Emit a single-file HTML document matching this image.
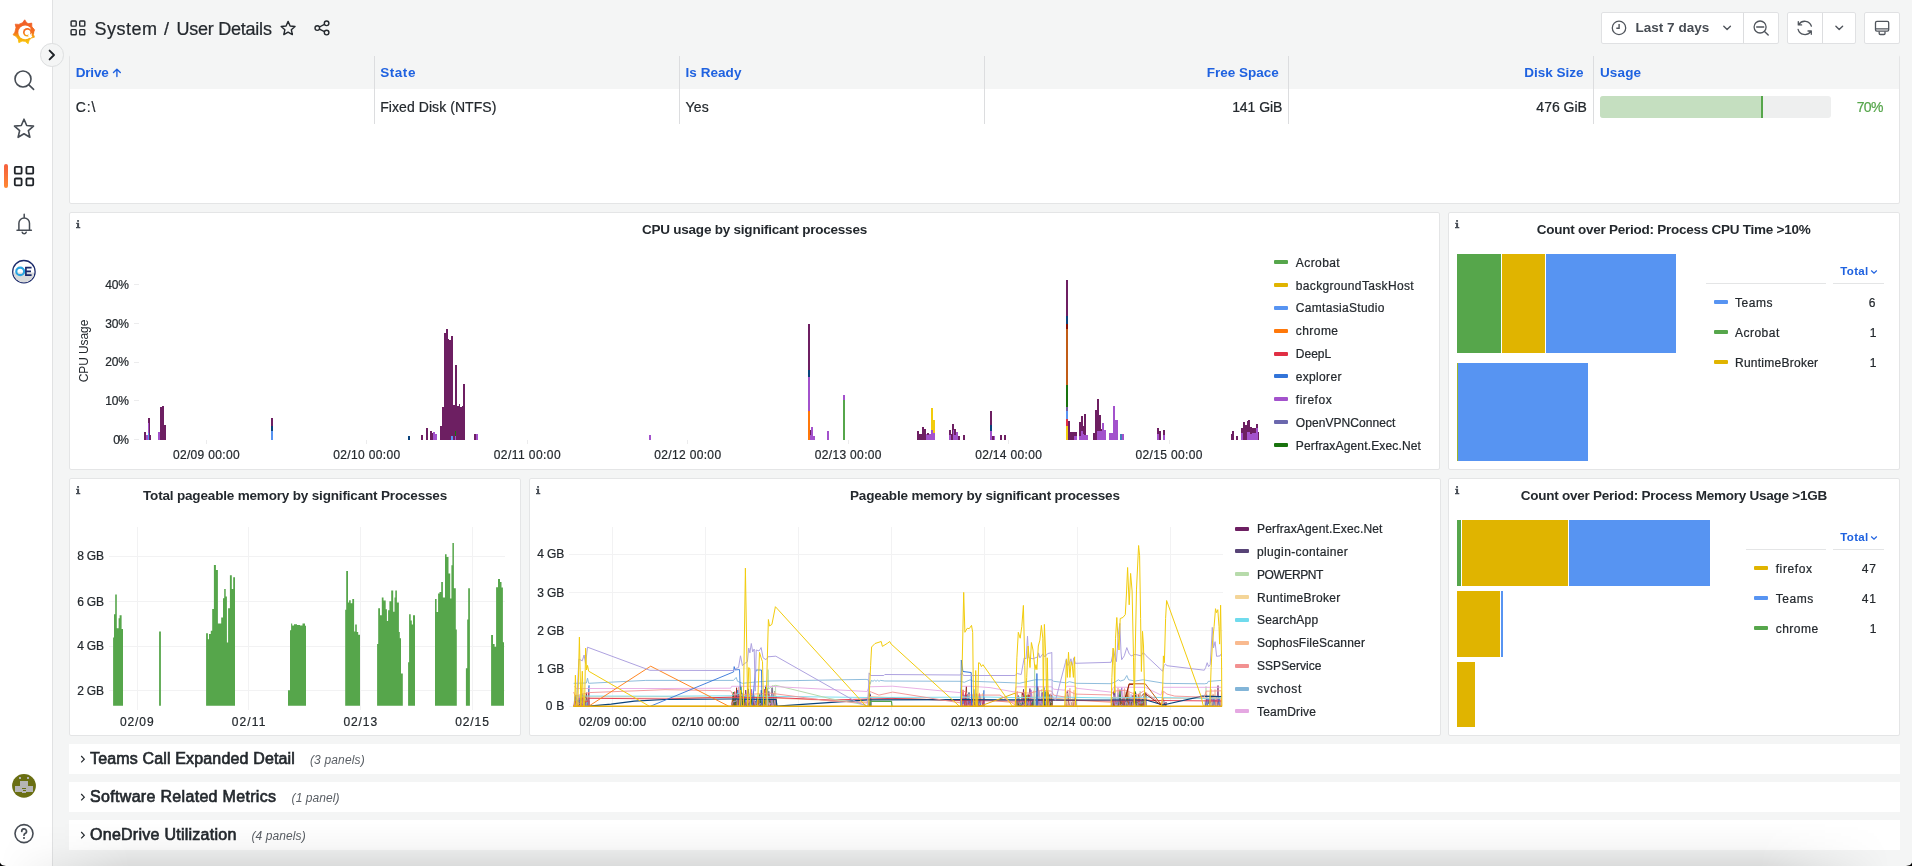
<!DOCTYPE html><html><head><meta charset="utf-8"><title>System / User Details</title><style>
*{box-sizing:border-box;margin:0;padding:0}
html,body{width:1912px;height:866px;overflow:hidden;background:#f4f5f5;font-family:"Liberation Sans",sans-serif;color:#24292e;font-size:14px}
#wrap{position:absolute;left:0;top:0;width:1912px;height:866px;overflow:hidden;will-change:transform;transform:translateZ(0)}
.abs{position:absolute}
#side{position:absolute;left:0;top:0;width:53px;height:866px;background:#fff;border-right:1px solid #e1e2e3}
.panel{position:absolute;background:#fff;border:1px solid #e4e5e6;border-radius:2px}
.t{position:absolute;white-space:nowrap;line-height:1}
.row{position:absolute;left:69px;width:1831px;height:30px;background:#fff}
.btn{position:absolute;background:#fff;border:1px solid #e0e1e3;border-radius:2px}
svg{position:absolute;overflow:visible}
.sw{position:absolute;width:14px;height:4px;border-radius:1px}
</style></head><body><div id="wrap">
<div id="side"></div>
<div class="t" style="left:94.52px;top:20.00px;font-size:18px;color:#24292e;letter-spacing:0.490px;-webkit-text-stroke:0.22px #24292e;">System</div>
<div class="t" style="left:163.92px;top:20.00px;font-size:18px;color:#24292e;-webkit-text-stroke:0.22px #24292e;">/</div>
<div class="t" style="left:176.52px;top:20.00px;font-size:18px;color:#24292e;letter-spacing:-0.242px;-webkit-text-stroke:0.22px #24292e;">User Details</div>
<div class="btn" style="left:1601px;top:12px;width:178px;height:32px"></div>
<div class="abs" style="left:1743px;top:13px;width:1px;height:30px;background:#dcdddf"></div>
<div class="t" style="left:1635.49px;top:21.00px;font-size:13.5px;color:#474c53;font-weight:bold;letter-spacing:0.018px;">Last 7 days</div>
<div class="btn" style="left:1787px;top:12px;width:69px;height:32px"></div>
<div class="abs" style="left:1822px;top:13px;width:1px;height:30px;background:#dcdddf"></div>
<div class="btn" style="left:1864px;top:12px;width:36px;height:32px"></div>
<div class="panel" style="left:69px;top:55px;width:1831px;height:149px"></div>
<div class="abs" style="left:70px;top:55px;width:1829px;height:34px;background:#f4f5f5"></div>
<div class="abs" style="left:374px;top:56px;width:1px;height:68px;background:#dcdddf"></div>
<div class="abs" style="left:679px;top:56px;width:1px;height:68px;background:#dcdddf"></div>
<div class="abs" style="left:984px;top:56px;width:1px;height:68px;background:#dcdddf"></div>
<div class="abs" style="left:1288px;top:56px;width:1px;height:68px;background:#dcdddf"></div>
<div class="abs" style="left:1593px;top:56px;width:1px;height:68px;background:#dcdddf"></div>
<div class="t" style="left:75.69px;top:66.00px;font-size:13.5px;color:#1f62e0;font-weight:bold;letter-spacing:-0.162px;">Drive</div>
<div class="t" style="left:380.19px;top:66.00px;font-size:13.5px;color:#1f62e0;font-weight:bold;letter-spacing:0.552px;">State</div>
<div class="t" style="left:685.59px;top:66.00px;font-size:13.5px;color:#1f62e0;font-weight:bold;letter-spacing:0.042px;">Is Ready</div>
<div class="t" style="left:1206.69px;top:66.00px;font-size:13.5px;color:#1f62e0;font-weight:bold;letter-spacing:0.009px;">Free Space</div>
<div class="t" style="left:1524.19px;top:66.00px;font-size:13.5px;color:#1f62e0;font-weight:bold;">Disk Size</div>
<div class="t" style="left:1599.89px;top:66.00px;font-size:13.5px;color:#1f62e0;font-weight:bold;letter-spacing:0.175px;">Usage</div>
<div class="t" style="left:75.66px;top:100.00px;font-size:14px;color:#24292e;letter-spacing:0.895px;-webkit-text-stroke:0.22px #24292e;">C:\</div>
<div class="t" style="left:380.16px;top:100.00px;font-size:14px;color:#24292e;letter-spacing:0.073px;-webkit-text-stroke:0.22px #24292e;">Fixed Disk (NTFS)</div>
<div class="t" style="left:685.56px;top:100.00px;font-size:14px;color:#24292e;letter-spacing:0.221px;-webkit-text-stroke:0.22px #24292e;">Yes</div>
<div class="t" style="left:1232.16px;top:100.00px;font-size:14px;color:#24292e;letter-spacing:-0.068px;-webkit-text-stroke:0.22px #24292e;">141 GiB</div>
<div class="t" style="left:1536.36px;top:100.00px;font-size:14px;color:#24292e;-webkit-text-stroke:0.22px #24292e;">476 GiB</div>
<div class="abs" style="left:1600px;top:96px;width:231px;height:22px;background:#eeefef;border-radius:3px"></div>
<div class="abs" style="left:1600px;top:96px;width:163px;height:22px;background:#c5dfc0;border-radius:3px 0 0 3px"></div>
<div class="abs" style="left:1761px;top:96px;width:2px;height:22px;background:#56a64b"></div>
<div class="t" style="left:1856.76px;top:100.00px;font-size:14px;color:#56a64b;letter-spacing:-0.720px;-webkit-text-stroke:0.22px #56a64b;">70%</div>
<div class="panel" style="left:69px;top:212px;width:1371px;height:258px"></div>
<div class="panel" style="left:1448px;top:212px;width:452px;height:258px"></div>
<div class="panel" style="left:69px;top:478px;width:452px;height:258px"></div>
<div class="panel" style="left:529px;top:478px;width:912px;height:258px"></div>
<div class="panel" style="left:1448px;top:478px;width:452px;height:258px"></div>
<div class="t" style="left:641.89px;top:223.00px;font-size:13.5px;color:#24292e;font-weight:bold;letter-spacing:-0.220px;">CPU usage by significant processes</div>
<div class="t" style="left:1536.69px;top:223.00px;font-size:13.5px;color:#24292e;font-weight:bold;letter-spacing:-0.249px;">Count over Period: Process CPU Time &gt;10%</div>
<div class="t" style="left:142.99px;top:489.00px;font-size:13.5px;color:#24292e;font-weight:bold;letter-spacing:-0.170px;">Total pageable memory by significant Processes</div>
<div class="t" style="left:849.99px;top:489.00px;font-size:13.5px;color:#24292e;font-weight:bold;letter-spacing:-0.178px;">Pageable memory by significant processes</div>
<div class="t" style="left:1520.79px;top:489.00px;font-size:13.5px;color:#24292e;font-weight:bold;letter-spacing:-0.245px;">Count over Period: Process Memory Usage &gt;1GB</div>
<div class="row" style="top:744px"></div>
<div class="t" style="left:90.04px;top:751.00px;font-size:16px;color:#24292e;letter-spacing:0.153px;-webkit-text-stroke:0.65px #24292e;">Teams Call Expanded Detail</div>
<div class="t" style="left:309.98px;top:754.00px;font-size:12px;color:#5a5f65;font-style:italic;letter-spacing:0.153px;">(3 panels)</div>
<svg style="left:79px;top:754px" width="8" height="10" viewBox="0 0 8 10"><path d="M2.2 2 L5.3 5.2 L2.2 8.4" fill="none" stroke="#24292e" stroke-width="1.2"/></svg>
<div class="row" style="top:782px"></div>
<div class="t" style="left:90.04px;top:789.00px;font-size:16px;color:#24292e;letter-spacing:0.317px;-webkit-text-stroke:0.65px #24292e;">Software Related Metrics</div>
<div class="t" style="left:291.58px;top:792.00px;font-size:12px;color:#5a5f65;font-style:italic;letter-spacing:0.085px;">(1 panel)</div>
<svg style="left:79px;top:792px" width="8" height="10" viewBox="0 0 8 10"><path d="M2.2 2 L5.3 5.2 L2.2 8.4" fill="none" stroke="#24292e" stroke-width="1.2"/></svg>
<div class="row" style="top:820px"></div>
<div class="t" style="left:90.04px;top:827.00px;font-size:16px;color:#24292e;letter-spacing:0.260px;-webkit-text-stroke:0.65px #24292e;">OneDrive Utilization</div>
<div class="t" style="left:251.38px;top:830.00px;font-size:12px;color:#5a5f65;font-style:italic;letter-spacing:0.109px;">(4 panels)</div>
<svg style="left:79px;top:830px" width="8" height="10" viewBox="0 0 8 10"><path d="M2.2 2 L5.3 5.2 L2.2 8.4" fill="none" stroke="#24292e" stroke-width="1.2"/></svg>
<div class="t" style="left:105.28px;top:279.00px;font-size:12px;color:#24292e;letter-spacing:-0.239px;-webkit-text-stroke:0.22px #24292e;">40%</div>
<div class="abs" style="left:134px;top:283.7px;width:5px;height:1px;background:#ececed"></div>
<div class="t" style="left:105.28px;top:318.00px;font-size:12px;color:#24292e;letter-spacing:-0.239px;-webkit-text-stroke:0.22px #24292e;">30%</div>
<div class="abs" style="left:134px;top:322.6px;width:5px;height:1px;background:#ececed"></div>
<div class="t" style="left:105.28px;top:356.00px;font-size:12px;color:#24292e;letter-spacing:-0.239px;-webkit-text-stroke:0.22px #24292e;">20%</div>
<div class="abs" style="left:134px;top:361.5px;width:5px;height:1px;background:#ececed"></div>
<div class="t" style="left:105.28px;top:395.00px;font-size:12px;color:#24292e;letter-spacing:-0.239px;-webkit-text-stroke:0.22px #24292e;">10%</div>
<div class="abs" style="left:134px;top:400.4px;width:5px;height:1px;background:#ececed"></div>
<div class="t" style="left:113.18px;top:434.00px;font-size:12px;color:#24292e;letter-spacing:-1.704px;-webkit-text-stroke:0.22px #24292e;">0%</div>
<div class="abs" style="left:134px;top:439.3px;width:5px;height:1px;background:#ececed"></div>
<div class="t" style="left:172.88px;top:449.00px;font-size:12px;color:#24292e;letter-spacing:0.345px;-webkit-text-stroke:0.22px #24292e;">02/09 00:00</div>
<div class="abs" style="left:205.8px;top:440px;width:1px;height:4px;background:#ececed"></div>
<div class="t" style="left:333.33px;top:449.00px;font-size:12px;color:#24292e;letter-spacing:0.345px;-webkit-text-stroke:0.22px #24292e;">02/10 00:00</div>
<div class="abs" style="left:366.2px;top:440px;width:1px;height:4px;background:#ececed"></div>
<div class="t" style="left:493.78px;top:449.00px;font-size:12px;color:#24292e;letter-spacing:0.434px;-webkit-text-stroke:0.22px #24292e;">02/11 00:00</div>
<div class="abs" style="left:526.7px;top:440px;width:1px;height:4px;background:#ececed"></div>
<div class="t" style="left:654.23px;top:449.00px;font-size:12px;color:#24292e;letter-spacing:0.345px;-webkit-text-stroke:0.22px #24292e;">02/12 00:00</div>
<div class="abs" style="left:687.1px;top:440px;width:1px;height:4px;background:#ececed"></div>
<div class="t" style="left:814.68px;top:449.00px;font-size:12px;color:#24292e;letter-spacing:0.345px;-webkit-text-stroke:0.22px #24292e;">02/13 00:00</div>
<div class="abs" style="left:847.6px;top:440px;width:1px;height:4px;background:#ececed"></div>
<div class="t" style="left:975.13px;top:449.00px;font-size:12px;color:#24292e;letter-spacing:0.345px;-webkit-text-stroke:0.22px #24292e;">02/14 00:00</div>
<div class="abs" style="left:1008.0px;top:440px;width:1px;height:4px;background:#ececed"></div>
<div class="t" style="left:1135.58px;top:449.00px;font-size:12px;color:#24292e;letter-spacing:0.345px;-webkit-text-stroke:0.22px #24292e;">02/15 00:00</div>
<div class="abs" style="left:1168.5px;top:440px;width:1px;height:4px;background:#ececed"></div>
<div class="t" style="left:84px;top:351px;font-size:12px;transform:translate(-50%,-50%) rotate(-90deg);letter-spacing:-0.1px;color:#24292e">CPU Usage</div>
<svg style="left:0;top:0" width="1912" height="866" shape-rendering="crispEdges"><rect x="143.9" y="432.0" width="2.1" height="8.0" fill="#6d1f62"/><rect x="146.0" y="435.0" width="2.0" height="5.0" fill="#a352cc"/><rect x="148.0" y="418.0" width="2.1" height="22.0" fill="#6d1f62"/><rect x="150.1" y="435.0" width="0.9" height="5.0" fill="#6d1f62"/><rect x="148.2" y="423.0" width="1.0" height="10.0" fill="#a352cc"/><rect x="148.2" y="433.0" width="1.0" height="7.0" fill="#5794f2"/><rect x="158.0" y="432.0" width="2.0" height="8.0" fill="#a352cc"/><rect x="160.0" y="407.0" width="2.1" height="33.0" fill="#6d1f62"/><rect x="162.1" y="406.0" width="1.9" height="34.0" fill="#6d1f62"/><rect x="164.0" y="425.0" width="2.0" height="15.0" fill="#6d1f62"/><rect x="271.0" y="418.0" width="2.0" height="8.0" fill="#6d1f62"/><rect x="271.0" y="426.0" width="2.0" height="5.0" fill="#0a437c"/><rect x="271.0" y="431.0" width="2.0" height="9.0" fill="#5794f2"/><rect x="407.9" y="435.8" width="2.1" height="4.2" fill="#0a437c"/><rect x="421.2" y="435.0" width="1.8" height="5.0" fill="#6d1f62"/><rect x="426.0" y="428.0" width="2.0" height="12.0" fill="#6d1f62"/><rect x="430.0" y="430.8" width="2.0" height="9.2" fill="#6d1f62"/><rect x="432.0" y="433.0" width="1.2" height="7.0" fill="#6d1f62"/><rect x="433.2" y="431.8" width="1.8" height="8.2" fill="#a352cc"/><rect x="435.0" y="434.0" width="2.0" height="6.0" fill="#a352cc"/><rect x="440.0" y="426.0" width="2.0" height="14.0" fill="#6d1f62"/><rect x="442.0" y="407.0" width="2.0" height="33.0" fill="#6d1f62"/><rect x="444.0" y="333.0" width="2.0" height="107.0" fill="#6d1f62"/><rect x="446.0" y="329.0" width="2.0" height="111.0" fill="#6d1f62"/><rect x="448.0" y="338.8" width="1.0" height="101.2" fill="#6d1f62"/><rect x="449.0" y="340.0" width="2.0" height="100.0" fill="#6d1f62"/><rect x="451.0" y="336.0" width="2.0" height="104.0" fill="#6d1f62"/><rect x="453.0" y="404.8" width="2.0" height="35.2" fill="#6d1f62"/><rect x="455.0" y="365.0" width="2.0" height="75.0" fill="#6d1f62"/><rect x="457.0" y="406.0" width="1.5" height="34.0" fill="#6d1f62"/><rect x="458.5" y="404.0" width="1.5" height="36.0" fill="#6d1f62"/><rect x="460.0" y="406.8" width="2.0" height="33.2" fill="#6d1f62"/><rect x="462.0" y="406.0" width="1.0" height="34.0" fill="#6d1f62"/><rect x="463.0" y="384.0" width="2.0" height="56.0" fill="#6d1f62"/><rect x="451.2" y="436.0" width="1.8" height="4.0" fill="#5794f2"/><rect x="455.0" y="431.0" width="1.2" height="5.0" fill="#19730e"/><rect x="455.0" y="436.0" width="1.2" height="4.0" fill="#a352cc"/><rect x="474.0" y="434.0" width="2.0" height="6.0" fill="#6d1f62"/><rect x="476.0" y="434.0" width="2.0" height="6.0" fill="#a352cc"/><rect x="648.8" y="435.2" width="2.2" height="4.8" fill="#a352cc"/><rect x="807.9" y="324.0" width="2.1" height="46.0" fill="#6d1f62"/><rect x="807.9" y="370.0" width="2.1" height="7.3" fill="#0a437c"/><rect x="807.9" y="377.3" width="2.1" height="33.7" fill="#a352cc"/><rect x="807.9" y="411.0" width="2.1" height="29.0" fill="#ff780a"/><rect x="810.0" y="430.3" width="1.3" height="4.7" fill="#6d1f62"/><rect x="810.0" y="435.0" width="1.3" height="5.0" fill="#a352cc"/><rect x="811.3" y="427.0" width="1.7" height="13.0" fill="#a352cc"/><rect x="813.0" y="436.0" width="2.0" height="4.0" fill="#a352cc"/><rect x="827.0" y="431.0" width="2.0" height="9.0" fill="#a352cc"/><rect x="843.0" y="395.0" width="2.0" height="4.8" fill="#a352cc"/><rect x="843.0" y="399.8" width="2.0" height="40.2" fill="#56a64b"/><rect x="917.0" y="431.2" width="1.9" height="8.8" fill="#6d1f62"/><rect x="918.9" y="434.0" width="3.1" height="6.0" fill="#6d1f62"/><rect x="922.0" y="427.0" width="2.0" height="13.0" fill="#6d1f62"/><rect x="924.0" y="429.0" width="1.9" height="11.0" fill="#6d1f62"/><rect x="925.9" y="434.2" width="1.3" height="5.8" fill="#a352cc"/><rect x="927.2" y="433.0" width="1.7" height="2.0" fill="#6d1f62"/><rect x="927.2" y="435.0" width="1.7" height="5.0" fill="#a352cc"/><rect x="928.9" y="434.0" width="2.1" height="6.0" fill="#a352cc"/><rect x="931.0" y="408.0" width="1.9" height="22.0" fill="#f2cc0c"/><rect x="931.0" y="430.0" width="1.9" height="10.0" fill="#a352cc"/><rect x="932.9" y="420.0" width="2.0" height="13.2" fill="#f2cc0c"/><rect x="932.9" y="433.2" width="2.0" height="6.8" fill="#a352cc"/><rect x="949.0" y="430.0" width="2.0" height="5.0" fill="#6d1f62"/><rect x="949.0" y="435.0" width="2.0" height="5.0" fill="#a352cc"/><rect x="951.0" y="434.0" width="1.1" height="6.0" fill="#6d1f62"/><rect x="952.1" y="424.0" width="0.9" height="16.0" fill="#6d1f62"/><rect x="953.0" y="424.0" width="1.0" height="6.0" fill="#6d1f62"/><rect x="953.0" y="430.0" width="1.0" height="10.0" fill="#a352cc"/><rect x="954.0" y="429.2" width="1.9" height="5.6" fill="#6d1f62"/><rect x="954.0" y="434.8" width="1.9" height="5.2" fill="#a352cc"/><rect x="955.9" y="431.9" width="2.0" height="8.1" fill="#a352cc"/><rect x="957.9" y="436.0" width="1.9" height="4.0" fill="#6d1f62"/><rect x="963.0" y="435.0" width="1.9" height="5.0" fill="#6d1f62"/><rect x="990.0" y="411.0" width="1.9" height="14.0" fill="#6d1f62"/><rect x="990.0" y="425.0" width="1.9" height="6.2" fill="#0a437c"/><rect x="990.0" y="431.2" width="1.9" height="8.8" fill="#a352cc"/><rect x="991.9" y="436.0" width="2.1" height="4.0" fill="#6d1f62"/><rect x="994.0" y="436.0" width="1.0" height="4.0" fill="#a352cc"/><rect x="1000.0" y="435.0" width="2.0" height="5.0" fill="#6d1f62"/><rect x="1004.0" y="435.0" width="2.0" height="5.0" fill="#6d1f62"/><rect x="1066.1" y="279.7" width="1.9" height="36.3" fill="#6d1f62"/><rect x="1066.1" y="316.0" width="1.9" height="7.5" fill="#0a437c"/><rect x="1066.1" y="323.5" width="1.9" height="5.1" fill="#890f02"/><rect x="1066.1" y="328.6" width="1.9" height="56.4" fill="#c15c17"/><rect x="1066.1" y="385.0" width="1.9" height="22.4" fill="#19730e"/><rect x="1066.1" y="407.4" width="1.9" height="4.0" fill="#705da0"/><rect x="1066.1" y="411.4" width="1.9" height="7.6" fill="#5794f2"/><rect x="1066.1" y="419.0" width="1.9" height="6.6" fill="#e02f44"/><rect x="1066.1" y="425.6" width="1.9" height="14.4" fill="#f2cc0c"/><rect x="1068.0" y="421.0" width="2.0" height="19.0" fill="#6d1f62"/><rect x="1070.0" y="432.2" width="2.0" height="7.8" fill="#6d1f62"/><rect x="1072.0" y="432.0" width="2.0" height="8.0" fill="#6d1f62"/><rect x="1074.0" y="432.0" width="2.6" height="3.7" fill="#6d1f62"/><rect x="1074.0" y="435.7" width="2.6" height="4.3" fill="#a352cc"/><rect x="1079.2" y="422.0" width="2.0" height="13.7" fill="#6d1f62"/><rect x="1079.2" y="435.7" width="2.0" height="4.3" fill="#a352cc"/><rect x="1081.2" y="416.0" width="1.8" height="14.6" fill="#6d1f62"/><rect x="1081.2" y="430.6" width="1.8" height="9.4" fill="#a352cc"/><rect x="1083.0" y="425.6" width="1.3" height="8.4" fill="#6d1f62"/><rect x="1083.0" y="434.0" width="1.3" height="6.0" fill="#a352cc"/><rect x="1084.3" y="413.8" width="1.7" height="21.2" fill="#6d1f62"/><rect x="1084.3" y="435.0" width="1.7" height="5.0" fill="#a352cc"/><rect x="1086.0" y="435.3" width="2.0" height="4.7" fill="#a352cc"/><rect x="1093.0" y="433.2" width="2.0" height="6.8" fill="#6d1f62"/><rect x="1095.0" y="410.0" width="2.0" height="30.0" fill="#6d1f62"/><rect x="1097.0" y="399.0" width="2.0" height="31.6" fill="#6d1f62"/><rect x="1097.0" y="430.6" width="2.0" height="9.4" fill="#a352cc"/><rect x="1099.0" y="414.8" width="1.7" height="15.8" fill="#6d1f62"/><rect x="1099.0" y="430.6" width="1.7" height="9.4" fill="#a352cc"/><rect x="1100.7" y="428.6" width="1.6" height="2.0" fill="#6d1f62"/><rect x="1100.7" y="430.6" width="1.6" height="9.4" fill="#a352cc"/><rect x="1102.3" y="423.0" width="1.7" height="17.0" fill="#a352cc"/><rect x="1104.0" y="429.6" width="2.0" height="10.4" fill="#a352cc"/><rect x="1109.1" y="433.2" width="4.1" height="6.8" fill="#a352cc"/><rect x="1113.2" y="406.0" width="2.0" height="34.0" fill="#a352cc"/><rect x="1115.2" y="420.0" width="2.4" height="20.0" fill="#a352cc"/><rect x="1120.0" y="434.0" width="2.0" height="6.0" fill="#447ebc"/><rect x="1122.0" y="434.0" width="2.0" height="6.0" fill="#a352cc"/><rect x="1157.0" y="428.0" width="2.0" height="6.0" fill="#6d1f62"/><rect x="1157.0" y="434.0" width="2.0" height="6.0" fill="#a352cc"/><rect x="1159.0" y="431.1" width="2.0" height="8.9" fill="#6d1f62"/><rect x="1163.1" y="430.1" width="1.9" height="4.9" fill="#6d1f62"/><rect x="1163.1" y="435.0" width="1.9" height="5.0" fill="#a352cc"/><rect x="1231.0" y="434.2" width="1.0" height="5.8" fill="#6d1f62"/><rect x="1232.0" y="431.1" width="2.0" height="8.9" fill="#6d1f62"/><rect x="1236.0" y="436.2" width="2.0" height="3.8" fill="#6d1f62"/><rect x="1241.1" y="428.1" width="1.9" height="4.9" fill="#6d1f62"/><rect x="1241.1" y="433.0" width="1.9" height="7.0" fill="#a352cc"/><rect x="1243.0" y="422.0" width="1.9" height="18.0" fill="#6d1f62"/><rect x="1244.9" y="425.0" width="2.1" height="15.0" fill="#6d1f62"/><rect x="1247.0" y="421.0" width="1.1" height="11.2" fill="#6d1f62"/><rect x="1247.0" y="432.2" width="1.1" height="7.8" fill="#a352cc"/><rect x="1248.1" y="420.0" width="1.7" height="12.2" fill="#6d1f62"/><rect x="1248.1" y="432.2" width="1.7" height="7.8" fill="#a352cc"/><rect x="1249.8" y="427.0" width="2.0" height="6.5" fill="#6d1f62"/><rect x="1249.8" y="433.5" width="2.0" height="6.5" fill="#a352cc"/><rect x="1251.8" y="428.0" width="4.1" height="4.5" fill="#6d1f62"/><rect x="1251.8" y="432.5" width="4.1" height="7.5" fill="#a352cc"/><rect x="1255.9" y="424.0" width="1.9" height="4.0" fill="#6d1f62"/><rect x="1255.9" y="428.0" width="1.9" height="12.0" fill="#a352cc"/><rect x="1257.8" y="432.2" width="1.2" height="7.8" fill="#6d1f62"/></svg>
<div class="sw" style="left:1274px;top:259.9px;background:#56a64b"></div>
<div class="t" style="left:1295.78px;top:257.00px;font-size:12px;color:#24292e;letter-spacing:0.431px;-webkit-text-stroke:0.22px #24292e;">Acrobat</div>
<div class="sw" style="left:1274px;top:282.8px;background:#e0b400"></div>
<div class="t" style="left:1295.78px;top:280.00px;font-size:12px;color:#24292e;letter-spacing:0.340px;-webkit-text-stroke:0.22px #24292e;">backgroundTaskHost</div>
<div class="sw" style="left:1274px;top:305.7px;background:#5794f2"></div>
<div class="t" style="left:1295.78px;top:302.00px;font-size:12px;color:#24292e;letter-spacing:0.310px;-webkit-text-stroke:0.22px #24292e;">CamtasiaStudio</div>
<div class="sw" style="left:1274px;top:328.6px;background:#ff780a"></div>
<div class="t" style="left:1295.78px;top:325.00px;font-size:12px;color:#24292e;letter-spacing:0.445px;-webkit-text-stroke:0.22px #24292e;">chrome</div>
<div class="sw" style="left:1274px;top:351.5px;background:#e02f44"></div>
<div class="t" style="left:1295.78px;top:348.00px;font-size:12px;color:#24292e;letter-spacing:0.020px;-webkit-text-stroke:0.22px #24292e;">DeepL</div>
<div class="sw" style="left:1274px;top:374.4px;background:#3274d9"></div>
<div class="t" style="left:1295.78px;top:371.00px;font-size:12px;color:#24292e;letter-spacing:0.327px;-webkit-text-stroke:0.22px #24292e;">explorer</div>
<div class="sw" style="left:1274px;top:397.3px;background:#a352cc"></div>
<div class="t" style="left:1295.78px;top:394.00px;font-size:12px;color:#24292e;letter-spacing:0.544px;-webkit-text-stroke:0.22px #24292e;">firefox</div>
<div class="sw" style="left:1274px;top:420.2px;background:#6b68ae"></div>
<div class="t" style="left:1295.78px;top:417.00px;font-size:12px;color:#24292e;letter-spacing:0.070px;-webkit-text-stroke:0.22px #24292e;">OpenVPNConnect</div>
<div class="sw" style="left:1274px;top:443.1px;background:#19730e"></div>
<div class="t" style="left:1295.78px;top:440.00px;font-size:12px;color:#24292e;letter-spacing:0.154px;-webkit-text-stroke:0.22px #24292e;">PerfraxAgent.Exec.Net</div>
<div class="abs" style="left:109px;top:555.7px;width:395.5px;height:1px;background:#f2f2f3"></div>
<div class="abs" style="left:109px;top:600.8px;width:395.5px;height:1px;background:#f2f2f3"></div>
<div class="abs" style="left:109px;top:645.8px;width:395.5px;height:1px;background:#f2f2f3"></div>
<div class="abs" style="left:109px;top:689.9px;width:395.5px;height:1px;background:#f2f2f3"></div>
<div class="abs" style="left:136.9px;top:527px;width:1px;height:183px;background:#f2f2f3"></div>
<div class="abs" style="left:248.2px;top:527px;width:1px;height:183px;background:#f2f2f3"></div>
<div class="abs" style="left:360.1px;top:527px;width:1px;height:183px;background:#f2f2f3"></div>
<div class="abs" style="left:471.7px;top:527px;width:1px;height:183px;background:#f2f2f3"></div>
<div class="t" style="left:77.18px;top:550.00px;font-size:12px;color:#24292e;letter-spacing:-0.169px;-webkit-text-stroke:0.22px #24292e;">8 GB</div>
<div class="t" style="left:77.18px;top:596.00px;font-size:12px;color:#24292e;letter-spacing:-0.169px;-webkit-text-stroke:0.22px #24292e;">6 GB</div>
<div class="t" style="left:77.18px;top:640.00px;font-size:12px;color:#24292e;letter-spacing:-0.169px;-webkit-text-stroke:0.22px #24292e;">4 GB</div>
<div class="t" style="left:77.18px;top:685.00px;font-size:12px;color:#24292e;letter-spacing:-0.169px;-webkit-text-stroke:0.22px #24292e;">2 GB</div>
<div class="t" style="left:119.98px;top:716.00px;font-size:12px;color:#24292e;letter-spacing:0.903px;-webkit-text-stroke:0.22px #24292e;">02/09</div>
<div class="t" style="left:231.68px;top:716.00px;font-size:12px;color:#24292e;letter-spacing:1.125px;-webkit-text-stroke:0.22px #24292e;">02/11</div>
<div class="t" style="left:343.48px;top:716.00px;font-size:12px;color:#24292e;letter-spacing:0.903px;-webkit-text-stroke:0.22px #24292e;">02/13</div>
<div class="t" style="left:455.18px;top:716.00px;font-size:12px;color:#24292e;letter-spacing:0.903px;-webkit-text-stroke:0.22px #24292e;">02/15</div>
<svg style="left:0;top:0" width="1912" height="866"><path d="M113.1 705.8L113.1 637.4L114.0 637.4L114.0 614.3L115.2 614.3L115.2 594.4L116.8 594.4L116.8 628.2L118.6 628.2L118.6 618.2L119.6 618.2L119.6 615.2L121.6 615.2L121.6 629.1L123.0 629.1L123.0 705.8Z" fill="#56a64b"/><path d="M159.1 705.8L159.1 631.4L160.9 631.4L160.9 705.8Z" fill="#56a64b"/><path d="M206.1 705.8L206.1 633.3L207.9 633.3L207.9 639.2L209.0 639.2L209.0 633.9L210.8 633.9L210.8 630.7L212.2 630.7L212.2 609.1L213.9 609.1L213.9 565.1L215.9 565.1L215.9 570.0L217.9 570.0L217.9 623.5L221.2 623.5L221.2 617.6L223.0 617.6L223.0 598.3L224.2 598.3L224.2 589.1L225.7 589.1L225.7 596.6L226.9 596.6L226.9 642.5L228.1 642.5L228.1 608.3L229.9 608.3L229.9 575.3L231.8 575.3L231.8 589.1L233.2 589.1L233.2 577.3L235.0 577.3L235.0 705.8Z" fill="#56a64b"/><path d="M288.0 705.8L288.0 690.2L290.0 690.2L290.0 630.3L291.1 630.3L291.1 623.5L292.2 623.5L292.2 625.6L294.0 625.6L294.0 624.3L297.0 624.3L297.0 625.0L300.0 625.0L300.0 625.6L302.5 625.6L302.5 623.6L305.0 623.6L305.0 625.8L306.0 625.8L306.0 705.8Z" fill="#56a64b"/><path d="M345.2 705.8L345.2 609.8L346.2 609.8L346.2 571.0L348.0 571.0L348.0 602.5L349.1 602.5L349.1 600.3L350.7 600.3L350.7 603.3L352.3 603.3L352.3 599.0L354.1 599.0L354.1 631.4L355.2 631.4L355.2 624.5L356.8 624.5L356.8 632.0L358.2 632.0L358.2 634.7L360.0 634.7L360.0 705.8Z" fill="#56a64b"/><path d="M377.1 705.8L377.1 644.1L378.2 644.1L378.2 608.2L380.0 608.2L380.0 615.3L381.8 615.3L381.8 597.4L383.5 597.4L383.5 600.5L385.7 600.5L385.7 609.2L386.9 609.2L386.9 621.0L388.1 621.0L388.1 610.3L389.4 610.3L389.4 601.3L391.2 601.3L391.2 590.5L393.2 590.5L393.2 611.7L394.5 611.7L394.5 597.4L395.3 597.4L395.3 590.5L396.9 590.5L396.9 602.5L398.9 602.5L398.9 632.0L399.8 632.0L399.8 638.3L401.0 638.3L401.0 673.6L402.8 673.6L402.8 705.8Z" fill="#56a64b"/><path d="M408.1 705.8L408.1 662.2L409.1 662.2L409.1 614.3L410.7 614.3L410.7 620.6L411.8 620.6L411.8 624.5L413.0 624.5L413.0 615.3L415.0 615.3L415.0 705.8Z" fill="#56a64b"/><path d="M435.0 705.8L435.0 599.0L436.6 599.0L436.6 612.1L438.1 612.1L438.1 593.4L439.5 593.4L439.5 591.9L441.2 591.9L441.2 582.0L442.9 582.0L442.9 597.6L445.0 597.6L445.0 554.3L446.6 554.3L446.6 557.0L448.5 557.0L448.5 573.6L450.2 573.6L450.2 598.6L451.4 598.6L451.4 565.3L452.4 565.3L452.4 543.1L453.9 543.1L453.9 588.2L455.8 588.2L455.8 629.4L456.8 629.4L456.8 705.8Z" fill="#56a64b"/><path d="M465.9 705.8L465.9 668.2L467.2 668.2L467.2 619.4L468.2 619.4L468.2 588.2L469.9 588.2L469.9 705.8Z" fill="#56a64b"/><path d="M491.1 705.8L491.1 635.0L493.0 635.0L493.0 643.9L494.6 643.9L494.6 646.8L496.1 646.8L496.1 587.2L498.0 587.2L498.0 579.1L500.0 579.1L500.0 582.0L501.5 582.0L501.5 587.6L502.9 587.6L502.9 642.2L504.0 642.2L504.0 705.8Z" fill="#56a64b"/></svg>
<div class="abs" style="left:569.4px;top:553.6px;width:653.4px;height:1px;background:#f2f2f3"></div>
<div class="abs" style="left:569.4px;top:591.7px;width:653.4px;height:1px;background:#f2f2f3"></div>
<div class="abs" style="left:569.4px;top:629.7px;width:653.4px;height:1px;background:#f2f2f3"></div>
<div class="abs" style="left:569.4px;top:667.8px;width:653.4px;height:1px;background:#f2f2f3"></div>
<div class="abs" style="left:569.4px;top:705.7px;width:653.4px;height:1px;background:#f2f2f3"></div>
<div class="abs" style="left:612.1px;top:527px;width:1px;height:183px;background:#f2f2f3"></div>
<div class="t" style="left:578.98px;top:716.00px;font-size:12px;color:#24292e;letter-spacing:0.385px;-webkit-text-stroke:0.22px #24292e;">02/09 00:00</div>
<div class="abs" style="left:705.1px;top:527px;width:1px;height:183px;background:#f2f2f3"></div>
<div class="t" style="left:671.98px;top:716.00px;font-size:12px;color:#24292e;letter-spacing:0.385px;-webkit-text-stroke:0.22px #24292e;">02/10 00:00</div>
<div class="abs" style="left:798.1px;top:527px;width:1px;height:183px;background:#f2f2f3"></div>
<div class="t" style="left:764.98px;top:716.00px;font-size:12px;color:#24292e;letter-spacing:0.474px;-webkit-text-stroke:0.22px #24292e;">02/11 00:00</div>
<div class="abs" style="left:891.1px;top:527px;width:1px;height:183px;background:#f2f2f3"></div>
<div class="t" style="left:857.98px;top:716.00px;font-size:12px;color:#24292e;letter-spacing:0.385px;-webkit-text-stroke:0.22px #24292e;">02/12 00:00</div>
<div class="abs" style="left:984.1px;top:527px;width:1px;height:183px;background:#f2f2f3"></div>
<div class="t" style="left:950.98px;top:716.00px;font-size:12px;color:#24292e;letter-spacing:0.385px;-webkit-text-stroke:0.22px #24292e;">02/13 00:00</div>
<div class="abs" style="left:1077.1px;top:527px;width:1px;height:183px;background:#f2f2f3"></div>
<div class="t" style="left:1043.98px;top:716.00px;font-size:12px;color:#24292e;letter-spacing:0.385px;-webkit-text-stroke:0.22px #24292e;">02/14 00:00</div>
<div class="abs" style="left:1170.1px;top:527px;width:1px;height:183px;background:#f2f2f3"></div>
<div class="t" style="left:1136.98px;top:716.00px;font-size:12px;color:#24292e;letter-spacing:0.385px;-webkit-text-stroke:0.22px #24292e;">02/15 00:00</div>
<div class="t" style="left:537.18px;top:548.00px;font-size:12px;color:#24292e;letter-spacing:-0.069px;-webkit-text-stroke:0.22px #24292e;">4 GB</div>
<div class="t" style="left:537.18px;top:587.00px;font-size:12px;color:#24292e;letter-spacing:-0.069px;-webkit-text-stroke:0.22px #24292e;">3 GB</div>
<div class="t" style="left:537.18px;top:625.00px;font-size:12px;color:#24292e;letter-spacing:-0.069px;-webkit-text-stroke:0.22px #24292e;">2 GB</div>
<div class="t" style="left:537.18px;top:663.00px;font-size:12px;color:#24292e;letter-spacing:-0.069px;-webkit-text-stroke:0.22px #24292e;">1 GB</div>
<div class="t" style="left:545.68px;top:700.00px;font-size:12px;color:#24292e;letter-spacing:0.314px;-webkit-text-stroke:0.22px #24292e;">0 B</div>
<svg style="left:0;top:0" width="1912" height="866"><path d="M574.2 706.2L574.9 701.3L576.6 706.2L579.6 706.2L580.3 697.4L581.4 706.2L584.1 706.2L584.9 702.7L585.7 706.2" fill="none" stroke="#6d1f62" stroke-width="0.8" stroke-linejoin="round" opacity="0.9"/><path d="M574.8 706.2L575.6 700.5L577.0 706.2L579.1 706.2L580.0 698.5L581.7 706.2L584.7 706.2L585.4 696.3L586.9 706.2" fill="none" stroke="#0a437c" stroke-width="0.8" stroke-linejoin="round" opacity="0.9"/><path d="M574.6 706.2L575.6 694.9L576.9 706.2L578.4 706.2L579.3 699.8L580.7 706.2L585.1 706.2L586.4 692.7L587.0 706.2L587.8 706.2L589.0 700.8L589.0 706.2" fill="none" stroke="#890f02" stroke-width="0.8" stroke-linejoin="round" opacity="0.9"/><path d="M574.7 706.2L575.8 699.3L577.0 705.8L577.5 705.8L578.9 698.3L579.5 702.3L584.4 702.3L585.5 698.2L587.0 706.2" fill="none" stroke="#b7dbab" stroke-width="0.8" stroke-linejoin="round" opacity="0.9"/><path d="M573.9 706.2L574.8 703.5L575.7 703.8L580.3 703.8L581.5 700.2L582.8 701.3L587.1 701.3L588.9 696.5L589.0 706.2" fill="none" stroke="#f4d598" stroke-width="0.8" stroke-linejoin="round" opacity="0.9"/><path d="M573.8 706.2L574.6 702.2L575.9 706.2L577.2 706.2L578.4 704.4L579.8 706.2L580.5 706.2L581.9 688.8L583.5 706.2L587.8 706.2L588.9 688.0L589.0 706.2" fill="none" stroke="#f9ba8f" stroke-width="0.8" stroke-linejoin="round" opacity="0.9"/><path d="M573.7 706.2L574.9 702.2L575.5 706.2L576.0 706.2L576.8 698.1L577.8 706.2L582.2 706.2L583.5 695.5L585.5 706.2L587.8 706.2L589.0 702.6L589.0 706.2" fill="none" stroke="#f29191" stroke-width="0.8" stroke-linejoin="round" opacity="0.9"/><path d="M573.8 706.2L575.0 696.2L576.5 706.2L577.5 706.2L579.0 695.7L580.8 704.4L584.1 704.4L585.0 703.0L586.0 706.2" fill="none" stroke="#a352cc" stroke-width="0.8" stroke-linejoin="round" opacity="0.9"/><path d="M574.7 706.2L575.5 696.0L577.3 701.1L581.3 701.1L582.2 693.7L583.4 706.2L583.6 706.2L584.7 702.7L585.5 706.2L587.3 706.2L589.0 685.4L589.0 706.2" fill="none" stroke="#3274d9" stroke-width="0.8" stroke-linejoin="round" opacity="0.9"/><path d="M574.0 706.2L575.8 700.9L577.2 706.2L581.7 706.2L582.4 695.8L583.9 701.5L587.7 701.5L588.8 692.3L589.0 706.2" fill="none" stroke="#e02f44" stroke-width="0.8" stroke-linejoin="round" opacity="0.9"/><path d="M732.4 706.2L734.2 697.0L735.8 706.2L736.4 706.2L737.6 700.3L739.0 706.2L742.0 706.2L743.0 694.5L744.4 706.2L744.4 706.2L745.7 690.0L747.6 706.2L751.9 706.2L752.8 703.3L754.0 704.2L756.8 704.2L758.2 703.1L760.1 706.2L764.2 706.2L765.9 695.0L767.1 706.2L769.7 706.2L771.3 702.5L772.7 705.3L773.4 705.3L774.7 691.4L775.6 706.2" fill="none" stroke="#6d1f62" stroke-width="0.8" stroke-linejoin="round" opacity="0.9"/><path d="M732.6 706.2L733.2 702.5L734.0 706.2L734.5 706.2L736.0 695.5L737.9 706.2L741.0 706.2L741.8 692.8L742.7 706.2L746.7 706.2L748.2 688.9L750.0 704.6L752.8 704.6L753.6 699.0L754.2 706.2L754.6 706.2L755.5 701.2L756.4 706.2L760.3 706.2L761.3 690.1L762.2 706.2L764.6 706.2L765.6 685.8L766.9 701.2L767.7 701.2L768.8 691.3L769.9 706.2L770.4 706.2L771.6 701.8L772.8 706.2L774.4 706.2L776.0 696.4L776.0 704.8" fill="none" stroke="#0a437c" stroke-width="0.8" stroke-linejoin="round" opacity="0.9"/><path d="M731.2 706.2L732.7 701.7L733.6 706.2L735.7 706.2L736.6 687.7L737.4 702.8L740.9 702.8L742.4 704.1L743.2 704.6L743.3 704.6L744.0 702.7L745.8 706.2L750.1 706.2L751.9 700.8L753.0 702.5L753.2 702.5L753.9 695.6L754.7 706.2L755.7 706.2L756.9 697.1L757.7 706.2L761.1 706.2L761.7 699.3L762.6 706.2L766.3 706.2L767.5 688.5L768.3 706.2L771.6 706.2L772.8 693.0L774.6 706.2" fill="none" stroke="#890f02" stroke-width="0.8" stroke-linejoin="round" opacity="0.9"/><path d="M732.4 706.2L734.0 701.6L735.5 706.2L737.6 706.2L739.2 694.3L739.7 706.2L744.1 706.2L744.8 699.4L746.5 702.2L748.0 702.2L748.6 699.8L749.4 706.2L749.4 706.2L751.2 694.5L752.5 706.2L757.3 706.2L758.1 700.3L759.1 706.2L760.5 706.2L761.7 696.1L762.3 706.2L762.7 706.2L763.8 695.2L764.7 706.2L765.1 706.2L765.9 689.9L767.8 702.6L771.6 702.6L772.4 685.4L774.0 706.2L774.2 706.2L775.5 686.7L776.0 705.4" fill="none" stroke="#b7dbab" stroke-width="0.8" stroke-linejoin="round" opacity="0.9"/><path d="M732.0 706.2L733.3 702.7L735.1 706.2L738.6 706.2L739.3 703.0L740.7 703.9L743.0 703.9L744.3 703.2L745.9 706.2L745.9 706.2L747.1 702.9L748.4 706.2L748.7 706.2L750.3 692.4L752.0 706.2L755.8 706.2L757.6 699.6L758.8 706.2L761.2 706.2L761.9 694.9L763.3 706.2L766.3 706.2L767.8 700.0L768.8 706.2L768.8 706.2L770.6 703.5L771.3 706.2L773.7 706.2L774.9 691.8L776.0 706.2" fill="none" stroke="#f4d598" stroke-width="0.8" stroke-linejoin="round" opacity="0.9"/><path d="M731.4 706.2L732.0 702.4L733.2 700.4L735.5 700.4L737.2 699.0L739.1 706.2L739.5 706.2L741.2 691.7L741.9 703.1L746.4 703.1L747.6 693.9L749.4 706.2L750.2 706.2L751.3 694.3L752.9 706.2L754.7 706.2L755.3 702.6L757.0 705.5L761.6 705.5L763.1 698.7L764.0 706.2L765.9 706.2L767.6 699.0L769.3 704.5L769.5 704.5L771.2 695.0L772.1 706.2L774.7 706.2L776.0 699.4L776.0 706.2" fill="none" stroke="#f9ba8f" stroke-width="0.8" stroke-linejoin="round" opacity="0.9"/><path d="M731.8 706.2L733.3 693.5L733.8 703.5L737.6 703.5L738.8 687.0L740.7 706.2L741.5 706.2L742.5 697.6L744.1 704.6L747.4 704.6L748.8 698.2L749.4 706.2L749.8 706.2L751.0 689.3L751.8 700.2L754.1 700.2L755.0 700.6L755.7 706.2L757.3 706.2L758.6 700.0L760.5 703.7L762.5 703.7L763.4 697.4L765.1 706.2L767.9 706.2L769.1 701.0L770.6 704.9L771.9 704.9L773.3 701.4L774.5 706.2" fill="none" stroke="#f29191" stroke-width="0.8" stroke-linejoin="round" opacity="0.9"/><path d="M732.9 706.2L734.4 703.2L736.2 706.2L739.2 706.2L740.9 704.6L742.8 706.2L745.1 706.2L745.8 698.5L746.6 706.2L750.0 706.2L751.6 689.3L753.4 706.2L757.3 706.2L758.2 702.8L760.1 706.2L761.6 706.2L762.8 700.1L764.0 705.6L765.5 705.6L766.4 697.7L768.1 706.2L770.8 706.2L771.8 698.2L773.5 706.2" fill="none" stroke="#a352cc" stroke-width="0.8" stroke-linejoin="round" opacity="0.9"/><path d="M732.1 706.2L733.5 702.3L734.5 706.2L737.0 706.2L737.7 690.0L738.5 706.2L740.4 706.2L741.4 700.6L742.5 706.2L743.5 706.2L744.7 696.2L745.5 704.3L749.6 704.3L750.5 701.0L752.4 706.2L755.5 706.2L756.4 697.7L757.5 706.2L762.2 706.2L762.9 698.6L763.4 706.2L765.5 706.2L766.6 698.0L768.4 701.8L773.4 701.8L774.2 701.7L776.0 706.0" fill="none" stroke="#3274d9" stroke-width="0.8" stroke-linejoin="round" opacity="0.9"/><path d="M731.8 706.2L732.9 694.3L733.6 706.2L734.0 706.2L734.7 691.6L736.7 706.2L738.4 706.2L739.6 695.6L740.1 706.2L742.0 706.2L743.0 699.1L744.9 706.2L746.9 706.2L747.6 688.4L748.1 706.2L752.7 706.2L753.4 700.5L754.8 706.2L756.5 706.2L758.0 699.4L759.5 704.4L763.1 704.4L764.5 689.2L766.4 706.2L767.6 706.2L768.7 694.0L770.4 700.7L774.5 700.7L775.3 698.6L776.0 701.3" fill="none" stroke="#e02f44" stroke-width="0.8" stroke-linejoin="round" opacity="0.9"/><path d="M732.2 706.2L733.4 695.3L735.0 706.2L737.6 706.2L738.5 693.6L739.1 706.2L741.9 706.2L743.0 700.7L743.6 706.2L746.8 706.2L748.0 702.9L749.5 706.2L750.7 706.2L752.4 696.5L753.2 706.2L757.1 706.2L758.0 702.8L758.9 706.2L760.2 706.2L761.1 700.4L762.0 706.2L766.4 706.2L767.1 697.7L768.0 706.2L770.6 706.2L772.0 687.8L774.0 706.2" fill="none" stroke="#584477" stroke-width="0.8" stroke-linejoin="round" opacity="0.9"/><path d="M732.6 706.2L733.3 692.0L734.2 706.2L735.2 706.2L735.9 697.6L737.1 706.2L740.1 706.2L740.9 685.9L742.3 706.2L743.4 706.2L744.0 699.3L746.0 706.2L749.7 706.2L751.3 699.2L752.4 706.2L755.5 706.2L757.0 704.3L758.4 706.2L758.9 706.2L759.6 694.5L760.9 706.2L762.9 706.2L763.9 698.8L764.8 704.3L767.7 704.3L768.3 698.8L769.9 702.3L771.9 702.3L772.5 699.0L774.4 706.2" fill="none" stroke="#19730e" stroke-width="0.8" stroke-linejoin="round" opacity="0.9"/><path d="M731.8 706.2L732.6 698.4L733.1 706.2L736.3 706.2L737.7 700.1L738.7 706.2L739.5 706.2L740.3 700.7L740.9 706.2L744.6 706.2L746.2 701.8L746.8 704.3L749.8 704.3L751.5 693.6L753.0 705.2L756.9 705.2L758.2 700.2L759.0 706.2L761.9 706.2L763.1 703.8L764.1 706.2L765.4 706.2L766.2 687.7L768.0 702.2L771.4 702.2L772.7 701.1L774.0 706.2L775.6 706.2L776.0 697.9L776.0 706.2" fill="none" stroke="#c15c17" stroke-width="0.8" stroke-linejoin="round" opacity="0.9"/><path d="M731.4 706.2L732.5 703.2L733.4 701.5L735.7 701.5L736.8 699.2L737.4 706.2L739.2 706.2L740.6 696.0L741.1 706.2L745.8 706.2L747.0 695.9L747.6 706.2L749.4 706.2L750.1 703.3L751.5 706.2L752.1 706.2L753.3 698.3L755.2 705.2L759.2 705.2L760.2 703.1L761.8 706.2L766.3 706.2L767.4 694.9L768.3 703.3L771.3 703.3L772.3 694.0L772.8 706.2L773.6 706.2L775.3 696.7L776.0 705.5" fill="none" stroke="#aea2e0" stroke-width="0.8" stroke-linejoin="round" opacity="0.9"/><path d="M869.3 706.2L870.4 694.5L871.5 706.2" fill="none" stroke="#6d1f62" stroke-width="0.8" stroke-linejoin="round" opacity="0.9"/><path d="M868.5 706.2L869.6 692.5L871.3 706.2" fill="none" stroke="#0a437c" stroke-width="0.8" stroke-linejoin="round" opacity="0.9"/><path d="M869.2 706.2L869.9 699.4L870.7 706.2" fill="none" stroke="#890f02" stroke-width="0.8" stroke-linejoin="round" opacity="0.9"/><path d="M868.6 706.2L870.0 696.9L871.5 706.2" fill="none" stroke="#b7dbab" stroke-width="0.8" stroke-linejoin="round" opacity="0.9"/><path d="M961.1 706.2L962.0 702.9L962.9 706.2L965.0 706.2L965.8 695.0L966.6 706.2L966.7 706.2L967.7 703.3L969.0 706.2L971.0 706.2L971.9 697.4L973.3 706.2L974.0 706.2L975.1 699.7L975.7 706.2L979.1 706.2L980.0 698.9L980.5 706.2L983.3 706.2L984.0 697.4L984.0 706.2" fill="none" stroke="#6d1f62" stroke-width="0.8" stroke-linejoin="round" opacity="0.9"/><path d="M960.8 706.2L962.1 704.7L963.2 706.2L963.5 706.2L964.7 704.8L966.6 706.2L967.6 706.2L969.0 692.4L970.1 706.2L972.7 706.2L973.3 704.0L975.2 701.9L975.2 701.9L976.4 693.7L978.0 706.2L979.1 706.2L980.5 704.1L981.2 700.6" fill="none" stroke="#0a437c" stroke-width="0.8" stroke-linejoin="round" opacity="0.9"/><path d="M961.0 706.2L962.3 704.1L963.4 703.1L964.8 703.1L966.4 686.2L967.1 706.2L967.9 706.2L968.8 699.0L969.5 705.0L971.4 705.0L973.1 697.1L974.6 706.2L977.9 706.2L979.5 694.4L981.1 703.6" fill="none" stroke="#890f02" stroke-width="0.8" stroke-linejoin="round" opacity="0.9"/><path d="M961.6 706.2L962.7 695.8L964.1 706.2L964.9 706.2L965.7 704.7L967.6 706.2L968.3 706.2L969.0 704.7L970.5 706.2L970.8 706.2L972.2 704.6L973.2 701.3L977.7 701.3L979.2 702.5L980.7 706.2L982.0 706.2L982.6 702.8L984.0 702.4" fill="none" stroke="#b7dbab" stroke-width="0.8" stroke-linejoin="round" opacity="0.9"/><path d="M961.8 706.2L962.5 698.3L964.2 706.2L965.7 706.2L966.3 698.7L967.2 706.2L970.8 706.2L972.3 694.9L973.7 706.2L975.1 706.2L976.2 698.4L977.4 704.1L980.9 704.1L982.4 693.3L984.0 706.2" fill="none" stroke="#f4d598" stroke-width="0.8" stroke-linejoin="round" opacity="0.9"/><path d="M961.4 706.2L962.9 697.5L964.9 706.2L967.3 706.2L968.9 694.2L970.8 706.2L975.6 706.2L977.4 696.9L978.3 706.2L981.8 706.2L983.5 699.3L984.0 706.2" fill="none" stroke="#f9ba8f" stroke-width="0.8" stroke-linejoin="round" opacity="0.9"/><path d="M961.6 706.2L962.6 703.2L963.8 706.2L968.2 706.2L969.6 703.7L970.6 706.2L972.8 706.2L973.8 694.0L975.7 706.2L978.0 706.2L979.4 692.9L980.8 706.2L983.7 706.2L984.0 698.1L984.0 705.2" fill="none" stroke="#f29191" stroke-width="0.8" stroke-linejoin="round" opacity="0.9"/><path d="M962.0 706.2L963.0 697.2L964.5 706.2L967.1 706.2L968.5 699.6L970.3 706.2L971.0 706.2L972.4 699.6L973.4 706.2L978.2 706.2L979.6 694.4L980.3 705.6L982.2 705.6L983.7 699.3L984.0 706.2" fill="none" stroke="#a352cc" stroke-width="0.8" stroke-linejoin="round" opacity="0.9"/><path d="M960.7 706.2L961.9 698.8L962.4 703.6L963.5 703.6L964.1 694.8L965.0 706.2L966.2 706.2L967.5 694.1L969.0 702.2L972.3 702.2L973.9 689.3L975.4 706.2L977.7 706.2L979.1 700.0L981.0 706.2L983.0 706.2L983.9 690.3L984.0 706.2" fill="none" stroke="#3274d9" stroke-width="0.8" stroke-linejoin="round" opacity="0.9"/><path d="M961.3 706.2L963.0 689.8L964.8 706.2L964.9 706.2L965.6 692.1L966.5 706.2L970.0 706.2L970.8 700.7L972.1 706.2L975.7 706.2L977.3 699.7L978.3 706.2L982.0 706.2L983.5 698.9L984.0 705.5" fill="none" stroke="#e02f44" stroke-width="0.8" stroke-linejoin="round" opacity="0.9"/><path d="M1016.2 706.2L1017.3 704.1L1017.9 706.2L1022.4 706.2L1023.5 689.3L1024.4 706.2L1028.1 706.2L1029.9 688.5L1031.8 706.2L1032.6 706.2L1034.0 702.7L1035.2 706.2L1036.3 706.2L1037.7 701.6L1039.4 703.4L1040.9 703.4L1042.4 692.3L1043.6 704.8L1047.1 704.8L1048.3 695.4L1049.0 706.2" fill="none" stroke="#6d1f62" stroke-width="0.8" stroke-linejoin="round" opacity="0.9"/><path d="M1016.1 706.2L1017.0 700.0L1018.3 706.2L1018.7 706.2L1019.7 700.8L1020.7 706.2L1023.6 706.2L1024.3 695.9L1026.1 706.2L1026.2 706.2L1026.8 704.3L1027.8 706.2L1030.7 706.2L1031.8 702.4L1033.5 706.2L1035.5 706.2L1037.2 697.9L1038.6 702.2L1043.1 702.2L1043.9 687.4L1045.4 706.2L1049.1 706.2L1049.9 694.4L1050.6 706.2" fill="none" stroke="#0a437c" stroke-width="0.8" stroke-linejoin="round" opacity="0.9"/><path d="M1016.4 706.2L1017.6 699.2L1018.3 706.2L1020.8 706.2L1022.3 692.9L1023.0 706.2L1026.5 706.2L1028.1 694.5L1029.2 706.2L1034.0 706.2L1035.0 704.3L1036.5 706.2L1036.7 706.2L1037.7 686.1L1039.7 706.2L1042.1 706.2L1043.6 703.2L1045.0 706.2L1049.3 706.2L1050.9 699.3L1052.0 704.5" fill="none" stroke="#890f02" stroke-width="0.8" stroke-linejoin="round" opacity="0.9"/><path d="M1016.0 706.2L1017.0 702.7L1018.7 706.2L1021.2 706.2L1022.2 695.2L1023.0 706.2L1023.6 706.2L1024.6 701.8L1026.0 706.2L1029.9 706.2L1031.1 703.8L1032.3 706.2L1034.3 706.2L1035.1 704.8L1037.0 706.2L1040.3 706.2L1041.6 689.3L1043.0 706.2L1046.5 706.2L1047.2 689.6L1047.8 706.2L1050.9 706.2L1051.7 702.9L1052.0 700.7" fill="none" stroke="#b7dbab" stroke-width="0.8" stroke-linejoin="round" opacity="0.9"/><path d="M1016.2 706.2L1017.5 699.3L1018.4 706.2L1020.5 706.2L1021.8 701.8L1023.2 703.2L1025.8 703.2L1026.9 702.8L1028.4 706.2L1028.8 706.2L1030.1 693.6L1032.0 703.3L1034.0 703.3L1035.2 704.6L1037.0 706.2L1039.2 706.2L1039.9 703.0L1041.9 706.2L1046.2 706.2L1047.1 700.9L1048.5 706.2" fill="none" stroke="#f4d598" stroke-width="0.8" stroke-linejoin="round" opacity="0.9"/><path d="M1017.3 706.2L1018.8 696.0L1020.6 705.7L1023.7 705.7L1025.1 692.1L1027.0 705.9L1027.1 705.9L1028.5 704.8L1030.2 706.2L1031.8 706.2L1033.5 690.7L1035.3 706.2L1036.9 706.2L1038.0 691.4L1038.8 705.5L1043.6 705.5L1044.7 700.1L1045.7 700.5L1049.7 700.5L1050.6 696.0L1052.0 706.2" fill="none" stroke="#f9ba8f" stroke-width="0.8" stroke-linejoin="round" opacity="0.9"/><path d="M1016.7 706.2L1017.3 691.4L1018.0 702.7L1022.9 702.7L1024.3 701.4L1025.8 701.4L1027.2 701.4L1028.1 704.0L1028.8 701.6L1032.7 701.6L1034.3 695.5L1036.1 706.2L1037.5 706.2L1039.2 691.9L1040.2 706.2L1043.0 706.2L1044.5 699.0L1046.4 706.2L1049.4 706.2L1050.9 693.5L1052.0 706.2" fill="none" stroke="#f29191" stroke-width="0.8" stroke-linejoin="round" opacity="0.9"/><path d="M1016.3 706.2L1017.8 698.9L1019.5 706.2L1022.4 706.2L1023.6 695.1L1024.8 706.2L1025.8 706.2L1027.3 702.9L1028.3 706.2L1030.1 706.2L1031.0 689.9L1032.9 706.2L1037.2 706.2L1038.7 697.1L1039.5 706.2L1041.2 706.2L1041.9 692.8L1042.7 702.8L1045.6 702.8L1047.2 702.0L1048.3 701.6" fill="none" stroke="#a352cc" stroke-width="0.8" stroke-linejoin="round" opacity="0.9"/><path d="M1017.4 706.2L1018.4 695.4L1020.4 706.2L1020.6 706.2L1022.2 703.4L1023.4 700.7L1023.7 700.7L1025.4 692.4L1027.0 706.2L1028.6 706.2L1030.3 700.1L1031.8 706.2L1034.1 706.2L1035.0 701.5L1036.5 706.2L1041.2 706.2L1042.5 701.5L1043.0 704.7L1045.6 704.7L1047.4 690.0L1048.0 706.2L1051.8 706.2L1052.0 699.9L1052.0 705.6" fill="none" stroke="#3274d9" stroke-width="0.8" stroke-linejoin="round" opacity="0.9"/><path d="M1016.0 706.2L1017.1 703.8L1018.2 700.7L1022.7 700.7L1023.5 694.0L1024.1 704.9L1028.8 704.9L1029.5 695.1L1030.7 706.2L1035.3 706.2L1036.5 703.2L1037.5 703.3L1040.6 703.3L1042.1 701.7L1042.9 706.2L1047.3 706.2L1048.2 692.5L1049.4 706.2L1050.7 706.2L1051.5 699.4L1052.0 706.2" fill="none" stroke="#e02f44" stroke-width="0.8" stroke-linejoin="round" opacity="0.9"/><path d="M1015.7 706.2L1017.4 699.2L1018.9 706.2L1021.3 706.2L1022.8 701.1L1024.8 706.2L1026.1 706.2L1026.8 698.6L1027.7 705.9L1031.3 705.9L1032.7 700.9L1033.9 706.2L1036.4 706.2L1038.0 700.9L1039.3 706.2L1041.5 706.2L1042.8 698.8L1043.5 706.2L1047.3 706.2L1048.7 696.5L1050.4 701.8" fill="none" stroke="#584477" stroke-width="0.8" stroke-linejoin="round" opacity="0.9"/><path d="M1015.9 706.2L1017.3 700.2L1019.0 706.2L1020.0 706.2L1021.3 703.0L1023.0 703.1L1024.8 703.1L1026.4 695.4L1027.6 706.2L1032.2 706.2L1033.6 699.7L1034.5 706.2L1039.4 706.2L1040.4 704.4L1041.8 706.2L1044.4 706.2L1045.1 691.5L1046.1 706.2L1050.3 706.2L1051.9 695.9L1052.0 704.5" fill="none" stroke="#19730e" stroke-width="0.8" stroke-linejoin="round" opacity="0.9"/><path d="M1017.0 706.2L1018.2 695.9L1019.5 706.2L1024.3 706.2L1025.1 700.2L1026.1 706.2L1030.9 706.2L1032.3 704.5L1033.1 706.2L1036.1 706.2L1037.0 694.5L1038.2 706.2L1038.6 706.2L1039.4 703.2L1040.6 706.2L1042.0 706.2L1043.7 704.5L1045.0 706.2L1046.1 706.2L1047.6 691.0L1048.4 700.6L1050.3 700.6L1051.6 695.1L1052.0 705.9" fill="none" stroke="#c15c17" stroke-width="0.8" stroke-linejoin="round" opacity="0.9"/><path d="M1016.3 706.2L1017.9 696.4L1019.3 704.3L1021.3 704.3L1022.5 699.3L1024.4 704.7L1026.5 704.7L1027.3 698.7L1028.0 706.2L1029.0 706.2L1029.8 698.6L1031.8 700.6L1034.9 700.6L1036.3 704.7L1037.2 706.2L1038.6 706.2L1039.2 690.5L1039.9 706.2L1039.9 706.2L1040.9 698.5L1041.8 706.2L1042.4 706.2L1044.1 688.7L1046.0 706.2L1048.9 706.2L1050.2 701.1L1052.0 702.7" fill="none" stroke="#aea2e0" stroke-width="0.8" stroke-linejoin="round" opacity="0.9"/><path d="M1066.0 706.2L1067.6 691.4L1069.0 706.2L1072.2 706.2L1073.3 700.5L1075.1 706.2" fill="none" stroke="#6d1f62" stroke-width="0.8" stroke-linejoin="round" opacity="0.9"/><path d="M1066.1 706.2L1067.0 704.2L1068.3 706.2L1071.2 706.2L1072.0 702.4L1073.9 706.2L1075.6 706.2L1076.0 699.8L1076.0 705.2" fill="none" stroke="#0a437c" stroke-width="0.8" stroke-linejoin="round" opacity="0.9"/><path d="M1066.2 706.2L1067.5 694.5L1069.2 706.2L1073.0 706.2L1074.8 697.3L1076.0 706.2" fill="none" stroke="#890f02" stroke-width="0.8" stroke-linejoin="round" opacity="0.9"/><path d="M1065.2 706.2L1066.5 696.1L1067.5 705.6L1071.7 705.6L1073.1 698.3L1074.5 703.7L1075.1 703.7L1076.0 693.5L1076.0 702.8" fill="none" stroke="#b7dbab" stroke-width="0.8" stroke-linejoin="round" opacity="0.9"/><path d="M1066.1 706.2L1067.1 692.8L1068.3 706.2L1071.9 706.2L1073.1 699.2L1074.5 706.2L1074.6 706.2L1075.8 687.3L1076.0 706.2" fill="none" stroke="#f4d598" stroke-width="0.8" stroke-linejoin="round" opacity="0.9"/><path d="M1064.8 706.2L1065.7 695.5L1067.4 706.2L1072.2 706.2L1074.0 690.1L1074.8 706.2" fill="none" stroke="#f9ba8f" stroke-width="0.8" stroke-linejoin="round" opacity="0.9"/><path d="M1064.5 706.2L1066.2 704.1L1067.1 706.2L1068.7 706.2L1069.9 688.2L1071.2 706.2L1073.2 706.2L1074.6 701.7L1075.7 706.2" fill="none" stroke="#f29191" stroke-width="0.8" stroke-linejoin="round" opacity="0.9"/><path d="M1111.8 706.2L1112.8 697.3L1114.2 706.2L1118.6 706.2L1119.7 696.2L1121.1 704.1L1123.8 704.1L1124.8 704.4L1126.7 703.1L1127.3 703.1L1128.9 696.6L1130.9 703.7L1131.7 703.7L1132.5 695.6L1134.3 706.2L1134.6 706.2L1135.7 692.8L1137.7 706.2L1137.9 706.2L1138.5 700.8L1140.0 706.2L1144.6 706.2L1145.9 692.7L1146.0 706.2" fill="none" stroke="#6d1f62" stroke-width="0.8" stroke-linejoin="round" opacity="0.9"/><path d="M1112.4 706.2L1114.1 695.2L1115.4 706.2L1116.3 706.2L1117.1 698.5L1118.8 706.2L1119.3 706.2L1120.5 698.5L1121.7 706.2L1125.7 706.2L1127.2 698.7L1128.2 704.1L1129.0 704.1L1130.7 697.1L1132.6 706.2L1133.5 706.2L1134.2 695.4L1136.0 706.2L1140.8 706.2L1141.7 700.4L1142.6 706.2L1145.5 706.2L1146.0 701.8L1146.0 706.2" fill="none" stroke="#0a437c" stroke-width="0.8" stroke-linejoin="round" opacity="0.9"/><path d="M1113.2 706.2L1113.9 691.4L1115.4 706.2L1118.3 706.2L1120.0 697.9L1121.2 704.7L1122.1 704.7L1122.7 699.0L1124.5 706.2L1126.3 706.2L1127.4 697.8L1128.5 706.2L1129.1 706.2L1130.2 697.7L1131.4 706.2L1133.6 706.2L1134.6 696.8L1135.3 705.6L1136.7 705.6L1137.8 700.5L1139.5 706.2L1141.3 706.2L1142.4 699.6L1144.3 706.2" fill="none" stroke="#890f02" stroke-width="0.8" stroke-linejoin="round" opacity="0.9"/><path d="M1112.3 706.2L1113.7 698.9L1115.6 702.6L1117.8 702.6L1118.9 697.8L1120.2 706.2L1123.9 706.2L1125.2 691.8L1126.1 703.9L1129.4 703.9L1130.0 698.2L1131.6 706.2L1135.4 706.2L1136.8 701.7L1137.5 706.2L1139.3 706.2L1140.1 691.0L1141.7 706.2L1143.2 706.2L1144.2 693.4L1146.0 706.2" fill="none" stroke="#b7dbab" stroke-width="0.8" stroke-linejoin="round" opacity="0.9"/><path d="M1112.6 706.2L1113.4 698.5L1114.4 702.1L1118.9 702.1L1120.3 703.1L1121.2 704.1L1124.4 704.1L1125.3 701.9L1126.7 706.2L1130.1 706.2L1130.9 700.6L1131.7 706.2L1133.6 706.2L1134.9 703.4L1136.8 706.2L1138.0 706.2L1138.9 694.0L1140.0 706.2L1141.8 706.2L1143.3 704.5L1144.8 700.9" fill="none" stroke="#f4d598" stroke-width="0.8" stroke-linejoin="round" opacity="0.9"/><path d="M1112.7 706.2L1113.3 699.9L1114.3 704.1L1118.9 704.1L1120.0 694.2L1121.6 704.5L1122.0 704.5L1123.0 696.6L1124.3 706.2L1128.5 706.2L1129.1 692.7L1130.7 706.2L1133.3 706.2L1134.1 700.9L1136.0 702.8L1136.9 702.8L1138.2 698.4L1139.6 706.2L1139.9 706.2L1140.6 699.3L1142.0 706.2L1145.5 706.2L1146.0 694.4L1146.0 706.2" fill="none" stroke="#f9ba8f" stroke-width="0.8" stroke-linejoin="round" opacity="0.9"/><path d="M1113.2 706.2L1113.9 696.6L1115.5 706.2L1116.7 706.2L1118.0 687.7L1119.6 706.2L1122.9 706.2L1124.5 688.4L1125.6 706.2L1129.1 706.2L1129.9 703.9L1130.5 706.2L1131.5 706.2L1133.3 694.6L1134.0 706.2L1136.9 706.2L1137.5 700.7L1138.1 701.7L1138.5 701.7L1140.0 694.3L1140.9 706.2L1145.7 706.2L1146.0 699.1L1146.0 702.3" fill="none" stroke="#f29191" stroke-width="0.8" stroke-linejoin="round" opacity="0.9"/><path d="M1113.2 706.2L1114.6 689.3L1115.2 706.0L1117.1 706.0L1118.0 701.9L1119.4 700.6L1120.3 700.6L1121.8 687.5L1122.8 706.2L1126.9 706.2L1127.6 700.2L1129.5 704.7L1129.8 704.7L1131.2 703.3L1132.9 700.8L1137.6 700.8L1139.1 696.8L1141.1 706.2L1144.2 706.2L1145.0 699.8L1146.0 705.7" fill="none" stroke="#a352cc" stroke-width="0.8" stroke-linejoin="round" opacity="0.9"/><path d="M1112.2 706.2L1113.2 702.3L1113.8 706.2L1117.9 706.2L1118.9 694.9L1120.4 706.2L1122.5 706.2L1123.1 701.5L1125.0 706.2L1128.6 706.2L1129.8 698.1L1131.1 706.2L1132.1 706.2L1133.3 703.4L1134.5 706.2L1137.6 706.2L1139.3 698.3L1140.8 705.8L1144.2 705.8L1145.4 692.2L1146.0 706.2" fill="none" stroke="#3274d9" stroke-width="0.8" stroke-linejoin="round" opacity="0.9"/><path d="M1111.6 706.2L1112.9 697.9L1114.7 706.2L1118.4 706.2L1119.8 697.7L1120.9 706.2L1122.9 706.2L1124.1 697.1L1125.0 706.2L1129.8 706.2L1130.5 700.5L1132.3 706.2L1132.8 706.2L1134.3 692.1L1135.1 706.2L1137.8 706.2L1139.0 697.3L1140.4 706.2L1142.4 706.2L1143.2 702.7L1144.5 706.2" fill="none" stroke="#e02f44" stroke-width="0.8" stroke-linejoin="round" opacity="0.9"/><path d="M1113.2 706.2L1114.7 685.3L1115.3 703.8L1116.2 703.8L1117.7 700.5L1118.4 705.9L1119.6 705.9L1121.0 701.7L1123.0 706.2L1123.6 706.2L1125.2 701.2L1126.7 702.8L1131.3 702.8L1132.7 700.7L1133.8 702.1L1137.9 702.1L1139.1 704.2L1140.4 706.2L1142.8 706.2L1143.9 695.8L1144.9 706.2L1145.0 706.2L1146.0 695.5L1146.0 706.2" fill="none" stroke="#584477" stroke-width="0.8" stroke-linejoin="round" opacity="0.9"/><path d="M1112.2 706.2L1112.9 703.5L1113.8 706.2L1118.4 706.2L1120.0 689.7L1121.4 706.2L1126.4 706.2L1127.0 694.6L1128.0 706.2L1130.5 706.2L1131.2 702.7L1131.9 702.1L1133.9 702.1L1135.3 691.5L1136.5 706.2L1141.3 706.2L1142.3 699.0L1143.1 702.7L1143.3 702.7L1144.8 699.1L1145.8 706.2" fill="none" stroke="#19730e" stroke-width="0.8" stroke-linejoin="round" opacity="0.9"/><path d="M1111.9 706.2L1112.9 697.5L1113.5 706.2L1118.4 706.2L1119.9 703.2L1120.6 706.2L1120.9 706.2L1122.2 699.2L1123.6 706.2L1127.1 706.2L1127.8 689.3L1128.6 706.2L1131.4 706.2L1132.4 703.9L1134.1 700.6L1137.5 700.6L1138.5 694.5L1139.5 704.7L1143.9 704.7L1144.6 693.3L1145.6 706.2" fill="none" stroke="#c15c17" stroke-width="0.8" stroke-linejoin="round" opacity="0.9"/><path d="M1112.3 706.2L1113.8 695.0L1115.8 706.2L1116.9 706.2L1118.0 692.7L1119.3 706.2L1120.2 706.2L1121.7 704.4L1122.5 706.2L1125.8 706.2L1126.7 701.4L1128.5 706.2L1130.1 706.2L1131.1 694.3L1132.8 706.2L1137.1 706.2L1138.1 702.6L1138.8 702.9L1142.6 702.9L1144.1 695.2L1144.9 706.2L1145.9 706.2L1146.0 696.6L1146.0 706.2" fill="none" stroke="#aea2e0" stroke-width="0.8" stroke-linejoin="round" opacity="0.9"/><path d="M1161.8 706.2L1163.3 704.6L1165.1 706.2L1165.8 706.2L1166.0 702.0L1166.0 706.2" fill="none" stroke="#6d1f62" stroke-width="0.8" stroke-linejoin="round" opacity="0.9"/><path d="M1162.1 706.2L1163.3 698.5L1164.7 705.2" fill="none" stroke="#0a437c" stroke-width="0.8" stroke-linejoin="round" opacity="0.9"/><path d="M1163.1 706.2L1164.1 703.2L1165.3 706.2" fill="none" stroke="#890f02" stroke-width="0.8" stroke-linejoin="round" opacity="0.9"/><path d="M1162.4 706.2L1163.4 704.7L1164.9 706.2" fill="none" stroke="#b7dbab" stroke-width="0.8" stroke-linejoin="round" opacity="0.9"/><path d="M1205.9 706.2L1206.5 700.8L1207.4 706.2L1211.6 706.2L1212.7 695.7L1214.0 706.2L1216.8 706.2L1218.0 685.5L1218.9 706.2" fill="none" stroke="#6d1f62" stroke-width="0.8" stroke-linejoin="round" opacity="0.9"/><path d="M1205.5 706.2L1206.4 702.8L1208.1 703.5L1209.5 703.5L1210.4 693.7L1211.3 706.2L1211.8 706.2L1213.1 700.8L1214.2 700.6L1217.4 700.6L1218.6 704.6L1219.9 706.2" fill="none" stroke="#0a437c" stroke-width="0.8" stroke-linejoin="round" opacity="0.9"/><path d="M1205.2 706.2L1206.9 698.7L1208.7 703.0L1210.4 703.0L1212.2 695.5L1213.4 706.2L1215.2 706.2L1216.2 696.5L1218.0 706.2" fill="none" stroke="#890f02" stroke-width="0.8" stroke-linejoin="round" opacity="0.9"/><path d="M1204.6 706.2L1206.0 686.4L1207.1 706.2L1208.9 706.2L1210.3 691.7L1211.1 706.2L1212.4 706.2L1213.5 698.6L1214.5 706.2L1215.9 706.2L1217.1 698.8L1217.9 701.0L1219.2 701.0L1220.1 699.1L1221.1 706.2" fill="none" stroke="#b7dbab" stroke-width="0.8" stroke-linejoin="round" opacity="0.9"/><path d="M1204.8 706.2L1206.6 690.5L1207.4 706.2L1211.3 706.2L1212.8 693.9L1214.6 706.2L1219.0 706.2L1220.5 696.7L1221.2 705.4" fill="none" stroke="#f4d598" stroke-width="0.8" stroke-linejoin="round" opacity="0.9"/><path d="M1205.5 706.2L1206.3 701.2L1207.8 706.2L1209.5 706.2L1211.2 689.1L1213.2 706.2L1214.3 706.2L1215.0 689.4L1216.2 706.2L1218.4 706.2L1219.0 702.9L1220.9 706.2L1221.4 706.2L1221.5 691.5L1221.5 706.2" fill="none" stroke="#f9ba8f" stroke-width="0.8" stroke-linejoin="round" opacity="0.9"/><path d="M1205.8 706.2L1206.5 694.0L1207.5 706.2L1212.1 706.2L1213.7 694.4L1215.7 706.2L1216.1 706.2L1217.0 696.4L1217.6 706.2L1220.1 706.2L1221.5 693.3L1221.5 706.2" fill="none" stroke="#f29191" stroke-width="0.8" stroke-linejoin="round" opacity="0.9"/><path d="M1205.4 706.2L1206.8 697.7L1208.8 701.9L1210.8 701.9L1211.9 697.8L1212.6 700.9L1216.6 700.9L1217.9 698.8L1219.8 706.2" fill="none" stroke="#a352cc" stroke-width="0.8" stroke-linejoin="round" opacity="0.9"/><path d="M1205.3 706.2L1206.7 699.1L1207.3 706.2L1207.4 706.2L1208.9 698.2L1209.9 706.2L1212.6 706.2L1213.9 698.4L1215.1 706.2L1217.5 706.2L1219.3 697.4L1220.1 706.2" fill="none" stroke="#3274d9" stroke-width="0.8" stroke-linejoin="round" opacity="0.9"/><path d="M576.0 697.0L665.0 696.8L731.0 697.8L776.0 698.2L868.0 702.0L870.0 696.6L960.0 701.0L962.0 696.8L1015.0 703.0L1017.0 697.5L1052.0 698.0L1111.0 702.5L1113.0 697.2L1146.0 698.6L1162.0 705.0L1164.0 698.2L1221.5 698.4" fill="none" stroke="#f9ba8f" stroke-width="0.9" stroke-linejoin="round"/><path d="M576.0 696.0L665.0 696.2L731.0 695.8L740.0 693.0L742.0 696.0L776.0 696.4L868.0 697.5L960.0 697.2L984.0 697.0L1015.0 697.6L1052.0 697.0L1111.0 698.0L1146.0 697.2L1204.0 698.4L1221.5 697.8" fill="none" stroke="#70dbed" stroke-width="0.9" stroke-linejoin="round"/><path d="M589.0 698.3L665.0 698.9L731.0 697.2L776.0 697.6L830.0 700.0L868.0 699.0L892.0 698.4L960.0 700.5L1015.0 701.0L1052.0 700.2L1111.0 701.0L1146.0 700.4L1221.5 701.0" fill="none" stroke="#e02f44" stroke-width="0.9" stroke-linejoin="round"/><path d="M588.7 706.2L611.2 704.1L634.3 701.2L665.0 699.5L731.0 699.0L776.0 699.4L777.0 706.2L868.0 699.8L960.0 699.6L1015.0 699.8L1052.0 699.8L1064.0 700.0L1111.0 700.0L1146.0 700.0L1163.0 705.0L1202.3 696.1L1221.5 696.5" fill="none" stroke="#0a437c" stroke-width="1.2" stroke-linejoin="round"/><path d="M870.0 706.2L870.5 701.4L891.5 701.4L892.0 706.2" fill="none" stroke="#56a64b" stroke-width="1.2" stroke-linejoin="round"/><path d="M980.0 706.2L1015.3 693.1L1016.0 706.2" fill="none" stroke="#e5ac0e" stroke-width="1" stroke-linejoin="round"/><path d="M767.6 706.2L768.0 669.6L768.6 689.0L771.9 686.3L775.8 685.3L830.0 698.6L866.0 705.0" fill="none" stroke="#b7dbab" stroke-width="1" stroke-linejoin="round"/><path d="M1034.2 706.2L1034.6 669.6L1035.1 706.2" fill="none" stroke="#b7dbab" stroke-width="1" stroke-linejoin="round"/><path d="M573.7 692.0L575.0 696.0L589.0 692.6L665.0 689.7L730.7 690.8L732.6 694.1L738.5 695.1L770.0 693.1L830.0 701.0L867.1 703.0L869.1 691.2L871.4 692.1L878.9 695.1L892.6 692.1L960.4 702.9L961.7 691.2L965.3 691.6L967.2 695.0L1000.0 695.1L1015.0 704.9L1016.3 692.1L1029.0 693.1L1042.8 690.2L1051.7 691.2L1053.6 695.1L1064.8 697.0L1067.4 690.2L1075.2 694.1L1111.1 695.0L1113.5 691.2L1125.3 690.2L1137.0 695.1L1143.4 691.2L1162.0 704.0L1163.4 691.2L1167.0 694.1L1174.8 696.1L1204.3 697.1L1206.2 691.2L1221.5 690.8" fill="none" stroke="#f29191" stroke-width="0.9" stroke-linejoin="round"/><path d="M574.5 686.0L576.0 688.5L665.0 688.5L730.7 688.2L731.7 686.3L770.0 686.3L867.1 691.5L869.1 686.8L892.6 686.2L960.4 692.7L961.7 686.3L971.2 686.3L990.0 687.6L1015.0 692.1L1016.3 686.8L1051.7 686.8L1053.6 689.2L1064.8 690.2L1066.4 686.3L1075.2 686.3L1076.2 688.2L1111.1 692.1L1113.5 687.2L1145.3 687.3L1161.0 695.1L1163.0 687.3L1221.5 687.3" fill="none" stroke="#e5a8e2" stroke-width="0.9" stroke-linejoin="round"/><path d="M573.7 683.3L586.4 683.0L587.5 678.1L588.7 683.3L645.8 680.4L733.6 680.4L736.2 677.4L737.5 681.3L742.4 683.3L752.3 682.3L770.0 681.0L830.0 680.0L866.1 679.4L868.1 679.8L870.0 684.3L871.4 680.4L873.0 681.3L874.5 680.2L876.0 681.3L877.5 680.2L879.0 681.3L880.5 680.4L884.8 681.0L960.4 681.3L964.3 682.3L970.2 679.8L973.1 681.3L1015.3 682.9L1019.3 683.3L1035.0 679.8L1051.7 679.8L1053.6 681.3L1066.4 682.9L1069.3 681.7L1076.2 683.3L1111.1 683.7L1115.5 681.7L1118.4 679.8L1120.4 681.0L1124.3 679.8L1126.8 675.5L1128.6 679.8L1135.1 681.0L1143.0 679.8L1162.6 683.0L1165.0 683.4L1204.3 683.8L1207.2 683.4L1208.2 681.4L1221.5 680.4" fill="none" stroke="#82b5d8" stroke-width="0.9" stroke-linejoin="round"/><path d="M588.7 706.2L650.7 666.2L728.7 706.2" fill="none" stroke="#ff780a" stroke-width="0.9" stroke-linejoin="round"/><path d="M650.5 706.2L733.6 671.9L734.2 666.6L735.0 669.9L739.5 669.6L740.9 706.2L752.3 706.2L755.2 673.5L756.2 670.0L761.5 670.0L762.0 706.2" fill="none" stroke="#3274d9" stroke-width="0.9" stroke-linejoin="round"/><path d="M960.9 706.2L961.3 660.1L962.9 671.5L971.2 672.5L971.7 706.2" fill="none" stroke="#3274d9" stroke-width="1.0" stroke-linejoin="round"/><path d="M1036.5 706.2L1036.9 673.5L1037.4 706.2" fill="none" stroke="#3274d9" stroke-width="0.9" stroke-linejoin="round"/><path d="M1126.1 697.1L1129.0 683.8L1145.3 683.8L1156.2 698.1L1161.5 705.0" fill="none" stroke="#c15c17" stroke-width="1.0" stroke-linejoin="round"/><path d="M1125.3 697.1L1129.2 684.4L1133.0 684.4" fill="none" stroke="#890f02" stroke-width="0.9" stroke-linejoin="round"/><path d="M1141.4 696.1L1144.4 693.2L1161.0 705.0" fill="none" stroke="#890f02" stroke-width="0.9" stroke-linejoin="round"/><path d="M576.5 706.2L578.9 659.1L582.3 660.8L584.1 655.0L585.6 663.7L587.5 647.2L649.9 670.3L733.6 670.5L735.6 668.6L738.5 667.6L740.5 655.8L742.4 665.6L744.4 663.7L747.4 661.7L748.7 648.0L749.9 652.9L751.3 643.5L752.7 651.9L754.2 649.0L755.2 691.2L756.2 650.0L759.1 650.9L761.1 647.6L763.1 657.8L766.0 659.7L768.0 656.8L775.8 656.2L858.3 703.0L867.7 706.2L869.1 672.9L870.6 675.5L883.8 675.5L884.8 674.5L960.4 675.0L961.7 671.9L963.3 675.5L1015.0 675.5L1017.3 673.5L1021.2 674.5L1024.2 657.8L1026.1 658.8L1027.5 636.2L1028.7 657.8L1033.0 658.8L1037.9 656.8L1038.5 652.9L1039.9 657.8L1042.8 653.9L1044.8 656.8L1047.7 653.5L1051.1 652.9L1051.8 652.3L1052.2 697.0L1055.6 700.0L1065.4 662.7L1066.4 658.8L1067.8 665.6L1069.3 663.7L1070.9 658.8L1072.3 665.6L1073.8 657.8L1075.2 663.3L1111.1 662.3L1112.5 655.8L1113.5 649.0L1115.1 657.8L1116.4 661.7L1118.4 634.2L1119.8 623.4L1121.0 651.9L1121.7 659.7L1124.3 655.8L1126.8 647.6L1129.2 653.9L1131.2 655.8L1135.1 654.4L1141.0 655.8L1143.3 652.5L1145.9 655.5L1162.6 671.2L1164.0 665.7L1165.4 664.1L1167.0 665.7L1204.3 670.2L1205.6 667.7L1207.2 662.7L1208.6 666.7L1210.2 664.7L1211.1 650.0L1212.3 627.4L1213.5 648.0L1215.1 641.7L1216.6 656.3L1220.0 655.9L1221.5 653.5" fill="none" stroke="#aea2e0" stroke-width="1.0" stroke-linejoin="round"/><path d="M573.3 706.2L574.6 706.2L575.4 675.2L576.5 706.2L577.8 706.2L579.4 637.1L580.9 706.2L582.3 671.2L583.5 706.2L584.6 706.2L585.6 648.1L586.5 670.0L587.5 665.4L588.7 671.2L649.3 706.2L739.5 706.2L740.5 690.0L741.5 706.2L743.4 706.2L745.4 568.1L747.7 706.2L748.7 667.6L749.9 668.6L750.7 706.2L757.6 706.2L759.5 652.3L761.1 657.8L762.5 661.7L763.6 706.2L766.0 706.2L768.4 619.5L769.5 626.0L771.9 624.4L775.4 606.7L866.0 706.2L868.7 706.2L870.6 665.6L871.6 647.0L875.0 643.5L881.2 641.5L882.4 646.4L887.7 643.1L889.7 641.5L891.1 644.0L959.4 706.2L961.3 706.2L963.7 592.4L964.9 632.3L967.2 628.3L969.2 628.7L971.5 625.4L972.7 632.3L973.5 706.2L975.1 706.2L975.7 670.5L976.5 706.2L977.6 706.2L978.6 662.7L980.0 663.3L981.4 666.6L982.9 664.7L1012.4 706.2L1015.3 706.2L1016.9 657.8L1018.3 632.3L1020.2 638.2L1021.8 626.4L1023.4 605.4L1024.8 665.6L1025.5 706.2L1026.7 677.4L1028.1 646.0L1030.0 667.6L1031.4 642.5L1033.0 650.0L1035.0 669.6L1036.0 664.7L1036.9 669.6L1038.3 646.0L1039.9 640.1L1041.4 625.4L1042.8 638.2L1043.4 706.2L1043.8 657.8L1044.4 624.4L1045.8 657.8L1046.7 706.2L1047.3 657.8L1048.3 706.2L1064.8 706.2L1066.4 659.7L1067.4 677.4L1068.5 652.3L1069.9 677.4L1071.1 661.7L1072.3 665.6L1073.4 677.4L1074.6 656.8L1075.6 706.2L1111.1 706.2L1111.9 677.4L1113.1 648.0L1114.1 665.6L1114.7 693.1L1115.5 638.2L1116.8 617.5L1118.0 638.2L1119.0 650.0L1120.2 618.5L1122.9 617.5L1125.3 614.6L1126.4 595.0L1127.6 567.5L1129.2 604.8L1130.6 573.4L1132.1 591.0L1133.5 657.8L1134.3 706.2L1135.1 657.8L1136.5 589.1L1138.6 545.5L1139.6 555.7L1140.6 618.5L1141.4 671.5L1142.5 631.3L1143.5 646.0L1144.5 689.2L1145.3 706.2L1161.5 706.2L1162.6 693.2L1163.4 655.9L1164.4 662.7L1165.6 618.6L1166.6 600.5L1201.3 697.1L1203.3 706.2L1209.8 706.2L1211.1 667.7L1212.5 642.1L1214.1 626.4L1215.5 608.7L1216.6 612.7L1217.8 609.7L1219.0 626.4L1219.6 644.1L1220.6 605.2L1221.5 657.8L1221.9 706.2" fill="none" stroke="#f2cc0c" stroke-width="1.0" stroke-linejoin="round"/><path d="M573.3 706.2L1222 706.2" stroke="#e5ac0e" stroke-width="1.4"/></svg>
<div class="sw" style="left:1235px;top:526.6px;background:#6d1f62"></div>
<div class="t" style="left:1256.98px;top:523.00px;font-size:12px;color:#24292e;letter-spacing:0.169px;-webkit-text-stroke:0.22px #24292e;">PerfraxAgent.Exec.Net</div>
<div class="sw" style="left:1235px;top:549.4px;background:#584477"></div>
<div class="t" style="left:1256.98px;top:546.00px;font-size:12px;color:#24292e;letter-spacing:0.363px;-webkit-text-stroke:0.22px #24292e;">plugin-container</div>
<div class="sw" style="left:1235px;top:572.3px;background:#b7dbab"></div>
<div class="t" style="left:1256.98px;top:569.00px;font-size:12px;color:#24292e;letter-spacing:-0.428px;-webkit-text-stroke:0.22px #24292e;">POWERPNT</div>
<div class="sw" style="left:1235px;top:595.1px;background:#f4d598"></div>
<div class="t" style="left:1256.98px;top:592.00px;font-size:12px;color:#24292e;letter-spacing:0.268px;-webkit-text-stroke:0.22px #24292e;">RuntimeBroker</div>
<div class="sw" style="left:1235px;top:618.0px;background:#70dbed"></div>
<div class="t" style="left:1256.98px;top:614.00px;font-size:12px;color:#24292e;letter-spacing:0.221px;-webkit-text-stroke:0.22px #24292e;">SearchApp</div>
<div class="sw" style="left:1235px;top:640.8px;background:#f9ba8f"></div>
<div class="t" style="left:1256.98px;top:637.00px;font-size:12px;color:#24292e;letter-spacing:0.201px;-webkit-text-stroke:0.22px #24292e;">SophosFileScanner</div>
<div class="sw" style="left:1235px;top:663.6px;background:#f29191"></div>
<div class="t" style="left:1256.98px;top:660.00px;font-size:12px;color:#24292e;letter-spacing:0.057px;-webkit-text-stroke:0.22px #24292e;">SSPService</div>
<div class="sw" style="left:1235px;top:686.5px;background:#82b5d8"></div>
<div class="t" style="left:1256.98px;top:683.00px;font-size:12px;color:#24292e;letter-spacing:0.610px;-webkit-text-stroke:0.22px #24292e;">svchost</div>
<div class="sw" style="left:1235px;top:709.3px;background:#e5a8e2"></div>
<div class="t" style="left:1256.98px;top:706.00px;font-size:12px;color:#24292e;letter-spacing:0.212px;-webkit-text-stroke:0.22px #24292e;">TeamDrive</div>
<div class="abs" style="left:1456.8px;top:254.1px;width:44.1px;height:98.9px;background:#56a64b"></div>
<div class="abs" style="left:1501.6px;top:254.1px;width:43.7px;height:98.9px;background:#e0b400"></div>
<div class="abs" style="left:1546.0px;top:254.1px;width:129.7px;height:98.9px;background:#5794f2"></div>
<div class="abs" style="left:1456.8px;top:363.0px;width:131.0px;height:98.0px;background:#5794f2"></div>
<div class="abs" style="left:1456.8px;top:363.0px;width:0.4px;height:98.0px;background:#9fb52a"></div>
<div class="abs" style="left:1456.8px;top:520.0px;width:4.0px;height:65.8px;background:#56a64b"></div>
<div class="abs" style="left:1461.5px;top:520.0px;width:106.5px;height:65.8px;background:#e0b400"></div>
<div class="abs" style="left:1568.7px;top:520.0px;width:141.3px;height:65.8px;background:#5794f2"></div>
<div class="abs" style="left:1456.8px;top:591.3px;width:43.2px;height:65.5px;background:#e0b400"></div>
<div class="abs" style="left:1500.7px;top:591.3px;width:2.3px;height:65.5px;background:#5794f2"></div>
<div class="abs" style="left:1456.8px;top:662.3px;width:18.1px;height:64.7px;background:#e0b400"></div>
<div class="t" style="left:1840.31px;top:266.00px;font-size:11.5px;color:#1f62e0;font-weight:bold;letter-spacing:0.341px;">Total</div>
<svg style="left:1870px;top:268.6px" width="8" height="6" viewBox="0 0 8 6"><path d="M1.2 1.5 L4 4.2 L6.8 1.5" fill="none" stroke="#1f62e0" stroke-width="1.2"/></svg>
<div class="abs" style="left:1706.3px;top:283.0px;width:119.4px;height:1px;background:#e4e5e6"></div>
<div class="abs" style="left:1833.3px;top:283.0px;width:50.5px;height:1px;background:#e4e5e6"></div>
<div class="sw" style="left:1714px;top:300.4px;background:#5794f2"></div>
<div class="t" style="left:1734.98px;top:297.00px;font-size:12px;color:#24292e;letter-spacing:0.549px;-webkit-text-stroke:0.22px #24292e;">Teams</div>
<div class="t" style="left:1868.68px;top:297.00px;font-size:12px;color:#24292e;-webkit-text-stroke:0.22px #24292e;">6</div>
<div class="sw" style="left:1714px;top:330.4px;background:#56a64b"></div>
<div class="t" style="left:1734.98px;top:327.00px;font-size:12px;color:#24292e;letter-spacing:0.481px;-webkit-text-stroke:0.22px #24292e;">Acrobat</div>
<div class="t" style="left:1869.78px;top:327.00px;font-size:12px;color:#24292e;-webkit-text-stroke:0.22px #24292e;">1</div>
<div class="sw" style="left:1714px;top:360.4px;background:#e0b400"></div>
<div class="t" style="left:1734.98px;top:357.00px;font-size:12px;color:#24292e;letter-spacing:0.259px;-webkit-text-stroke:0.22px #24292e;">RuntimeBroker</div>
<div class="t" style="left:1869.78px;top:357.00px;font-size:12px;color:#24292e;-webkit-text-stroke:0.22px #24292e;">1</div>
<div class="t" style="left:1840.31px;top:532.00px;font-size:11.5px;color:#1f62e0;font-weight:bold;letter-spacing:0.341px;">Total</div>
<svg style="left:1870px;top:534.8px" width="8" height="6" viewBox="0 0 8 6"><path d="M1.2 1.5 L4 4.2 L6.8 1.5" fill="none" stroke="#1f62e0" stroke-width="1.2"/></svg>
<div class="abs" style="left:1746px;top:548.9px;width:79.7px;height:1px;background:#e4e5e6"></div>
<div class="abs" style="left:1833.3px;top:548.9px;width:50.5px;height:1px;background:#e4e5e6"></div>
<div class="sw" style="left:1754px;top:566.4px;background:#e0b400"></div>
<div class="t" style="left:1775.68px;top:563.00px;font-size:12px;color:#24292e;letter-spacing:0.610px;-webkit-text-stroke:0.22px #24292e;">firefox</div>
<div class="t" style="left:1861.68px;top:563.00px;font-size:12px;color:#24292e;letter-spacing:0.992px;-webkit-text-stroke:0.22px #24292e;">47</div>
<div class="sw" style="left:1754px;top:596.3px;background:#5794f2"></div>
<div class="t" style="left:1775.68px;top:593.00px;font-size:12px;color:#24292e;letter-spacing:0.549px;-webkit-text-stroke:0.22px #24292e;">Teams</div>
<div class="t" style="left:1861.68px;top:593.00px;font-size:12px;color:#24292e;letter-spacing:0.992px;-webkit-text-stroke:0.22px #24292e;">41</div>
<div class="sw" style="left:1754px;top:626.2px;background:#56a64b"></div>
<div class="t" style="left:1775.68px;top:623.00px;font-size:12px;color:#24292e;letter-spacing:0.485px;-webkit-text-stroke:0.22px #24292e;">chrome</div>
<div class="t" style="left:1869.78px;top:623.00px;font-size:12px;color:#24292e;-webkit-text-stroke:0.22px #24292e;">1</div>
<svg style="left:0;top:0" width="53" height="60" viewBox="0 0 53 60"><defs><linearGradient id="gl" gradientUnits="userSpaceOnUse" x1="0" y1="20" x2="0" y2="44"><stop offset="0" stop-color="#f05a28"/><stop offset="0.52" stop-color="#f4701f"/><stop offset="0.68" stop-color="#f5a10f"/><stop offset="1" stop-color="#fbca0a"/></linearGradient></defs>
<path d="M16.00 27.59L15.24 24.13L18.77 24.40L22.51 22.77L24.73 19.81L26.73 22.92L28.57 23.62L31.76 23.11L31.81 26.34L32.82 28.03L34.67 29.80L33.70 32.16L33.42 34.27L34.46 37.18L31.50 38.04L29.14 40.06L28.13 43.79L25.12 41.36L22.03 41.12L18.85 42.69L18.26 39.20L15.92 36.27L13.04 34.81L14.90 32.16Z" fill="url(#gl)" stroke="url(#gl)" stroke-width="0.8" stroke-linejoin="round"/>
<circle cx="25.2" cy="32.4" r="6.9" fill="#fff"/>
<path d="M30.4 27.4 L33.6 28.2 L34.2 33.6 L31 33.2 Z" fill="url(#gl)"/>
<circle cx="27.3" cy="32.2" r="4.3" fill="url(#gl)"/>
<circle cx="27.5" cy="32.5" r="2.8" fill="#fff"/>
<path d="M27.8 33 L31.4 37.4" stroke="#fff" stroke-width="2.6"/>
<path d="M26 35.5 Q27.6 35.8 28.3 34.7" fill="none" stroke="#f5a10f" stroke-width="0.9"/></svg>
<svg style="left:0;top:60px" width="53" height="40" viewBox="0 60 53 40"><circle cx="23" cy="79" r="8" fill="none" stroke="#464c54" stroke-width="1.6"/><path d="M28.9 84.9L33.6 89.4" stroke="#464c54" stroke-width="1.6" stroke-linecap="round"/></svg>
<svg style="left:0;top:110px" width="53" height="40" viewBox="0 110 53 40"><path d="M24.00 119.20L26.70 125.48L33.51 126.11L28.37 130.62L29.88 137.29L24.00 133.80L18.12 137.29L19.63 130.62L14.49 126.11L21.30 125.48Z" fill="none" stroke="#464c54" stroke-width="1.6" stroke-linejoin="round"/></svg>
<div class="abs" style="left:4px;top:164px;width:4px;height:24px;border-radius:2px;background:linear-gradient(#f55f3e,#ff8833)"></div>
<svg style="left:0;top:0" width="100" height="200" viewBox="0 0 100 200"><rect x="14.80" y="166.90" width="6.80" height="6.80" rx="1" fill="none" stroke="#1f2328" stroke-width="1.8"/><rect x="14.80" y="178.50" width="6.80" height="6.80" rx="1" fill="none" stroke="#1f2328" stroke-width="1.8"/><rect x="26.40" y="166.90" width="6.80" height="6.80" rx="1" fill="none" stroke="#1f2328" stroke-width="1.8"/><rect x="26.40" y="178.50" width="6.80" height="6.80" rx="1" fill="none" stroke="#1f2328" stroke-width="1.8"/><rect x="71.10" y="21.00" width="5.10" height="5.10" rx="0.8" fill="none" stroke="#24292e" stroke-width="1.4"/><rect x="71.10" y="29.60" width="5.10" height="5.10" rx="0.8" fill="none" stroke="#24292e" stroke-width="1.4"/><rect x="79.70" y="21.00" width="5.10" height="5.10" rx="0.8" fill="none" stroke="#24292e" stroke-width="1.4"/><rect x="79.70" y="29.60" width="5.10" height="5.10" rx="0.8" fill="none" stroke="#24292e" stroke-width="1.4"/></svg>
<svg style="left:0;top:205px" width="53" height="40" viewBox="0 205 53 40"><path d="M17 230.2 H31.4 M18.9 230 V223.2 A5.3 5.3 0 0 1 29.5 223.2 V230 M24.2 214.3 V217.6 M22.2 232.2 A2.1 2.1 0 0 0 26.2 232.2" fill="none" stroke="#464c54" stroke-width="1.5" stroke-linecap="round" stroke-linejoin="round"/></svg>
<svg style="left:0;top:255px" width="53" height="34" viewBox="0 255 53 34"><defs><clipPath id="oec"><circle cx="23.9" cy="271.7" r="10.6"/></clipPath></defs>
<circle cx="23.9" cy="271.7" r="11.2" fill="#fff" stroke="#1b2a6b" stroke-width="1.3"/>
<rect x="12" y="272.5" width="24" height="12" fill="#d9dadb" clip-path="url(#oec)"/>
<ellipse cx="20.2" cy="271.4" rx="3.9" ry="3.7" fill="none" stroke="#2aa5e1" stroke-width="2.2"/>
<path d="M25.2 267.6 H31.6 M25.2 271.4 H31 M25.2 275.2 H31.6 M25.9 267 V275.8" stroke="#1b2a6b" stroke-width="1.7" fill="none"/></svg>
<svg style="left:0;top:770px" width="53" height="32" viewBox="0 770 53 32" shape-rendering="crispEdges"><circle cx="24" cy="785.8" r="11.9" fill="#6a6f12" shape-rendering="geometricPrecision"/>
<rect x="19.2" y="776.8" width="1.7" height="1.9" fill="#b5b5b5"/><rect x="26.9" y="776.8" width="1.7" height="1.9" fill="#b5b5b5"/>
<rect x="19.8" y="781.2" width="8.6" height="6.8" fill="#b5b5b5"/>
<rect x="15.2" y="785.8" width="4.7" height="6" fill="#b5b5b5"/><rect x="28.3" y="785.8" width="5" height="6" fill="#b5b5b5"/>
<rect x="19.8" y="788" width="2" height="3.9" fill="#b5b5b5"/><rect x="26.4" y="788" width="2" height="3.9" fill="#b5b5b5"/>
<rect x="21.8" y="789.3" width="4.6" height="3.6" fill="#b5b5b5"/><rect x="22.6" y="790" width="3" height="1.2" fill="#6a6f12"/></svg>
<svg style="left:0;top:820px" width="53" height="30" viewBox="0 820 53 30"><circle cx="24" cy="833.6" r="9" fill="none" stroke="#464c54" stroke-width="1.6"/><path d="M21.7 831.4 A2.4 2.4 0 1 1 24.9 833.6 Q24 834 24 835.2" fill="none" stroke="#464c54" stroke-width="1.7" stroke-linecap="round"/><circle cx="24" cy="838" r="1.05" fill="#464c54"/></svg>
<div class="abs" style="left:40.3px;top:43.3px;width:23.4px;height:23.4px;border-radius:50%;background:#f4f5f5;border:1px solid #dcdedf"></div>
<svg style="left:44px;top:46px" width="16" height="18" viewBox="44 46 16 18"><path d="M49.6 50.6 L54 55 L49.6 59.4" fill="none" stroke="#1f2328" stroke-width="1.9" stroke-linecap="round" stroke-linejoin="round"/></svg>
<svg style="left:276px;top:16px" width="60" height="24" viewBox="276 16 60 24"><path d="M288.10 21.40L290.10 25.95L295.04 26.44L291.33 29.75L292.39 34.61L288.10 32.10L283.81 34.61L284.87 29.75L281.16 26.44L286.10 25.95Z" fill="none" stroke="#24292e" stroke-width="1.4" stroke-linejoin="round"/><circle cx="317.3" cy="28.1" r="2.3" fill="none" stroke="#24292e" stroke-width="1.4"/><circle cx="326.6" cy="23.3" r="2.3" fill="none" stroke="#24292e" stroke-width="1.4"/><circle cx="326.6" cy="32.6" r="2.3" fill="none" stroke="#24292e" stroke-width="1.4"/><path d="M319.4 27 L324.5 24.4 M319.4 29.2 L324.5 31.6" stroke="#24292e" stroke-width="1.4"/></svg>
<svg style="left:1600px;top:10px" width="300" height="36" viewBox="1600 10 300 36"><circle cx="1619" cy="27.9" r="6.7" fill="none" stroke="#50555c" stroke-width="1.3"/><path d="M1619.1 24 V28.3 H1616.3" fill="none" stroke="#50555c" stroke-width="1.4"/>
<path d="M1723.8 26.2 L1727.1 29.4 L1730.4 26.2" fill="none" stroke="#50555c" stroke-width="1.4" stroke-linecap="round" stroke-linejoin="round"/>
<circle cx="1760.1" cy="27" r="6" fill="none" stroke="#50555c" stroke-width="1.3"/><path d="M1756.7 27 H1763.7 M1764.5 31.4 L1768.2 35" stroke="#50555c" stroke-width="1.4" stroke-linecap="round"/>
<path d="M1811.4 26.2 A7 7 0 0 0 1798.9 24.4 M1798.3 21.6 V24.9 H1801.6" fill="none" stroke="#50555c" stroke-width="1.3" stroke-linecap="round" stroke-linejoin="round"/>
<path d="M1798.1 29.4 A7 7 0 0 0 1810.6 31.6 M1811.3 34.3 V31 H1808" fill="none" stroke="#50555c" stroke-width="1.3" stroke-linecap="round" stroke-linejoin="round"/>
<path d="M1835.9 26.3 L1839.2 29.5 L1842.6 26.3" fill="none" stroke="#50555c" stroke-width="1.4" stroke-linecap="round" stroke-linejoin="round"/>
<rect x="1875.5" y="21.4" width="13.2" height="9.8" rx="1.4" fill="none" stroke="#50555c" stroke-width="1.3"/><path d="M1875.5 28.9 H1888.7 M1879.2 31.4 V33.6 Q1879.2 34.5 1880.2 34.5 H1884 Q1885 34.5 1885 33.6 V31.4" fill="none" stroke="#50555c" stroke-width="1.3"/></svg>
<svg style="left:110px;top:66px" width="14" height="14" viewBox="110 66 14 14"><path d="M116.9 76.6 V69.6 M113.5 72.6 L116.9 69.3 L120.3 72.6" fill="none" stroke="#1f62e0" stroke-width="1.4" stroke-linecap="round" stroke-linejoin="round"/></svg>
<svg style="left:76px;top:219.8px" width="5" height="9" viewBox="0 0 5 9"><rect x="1" y="0" width="2.1" height="1.9" rx="0.8" fill="#464c54"/><path d="M0.2 2.8 H3.1 V7 H4.3 V8.2 H0 V7 H1.1 V4 H0.2Z" fill="#464c54"/></svg>
<svg style="left:1455px;top:219.8px" width="5" height="9" viewBox="0 0 5 9"><rect x="1" y="0" width="2.1" height="1.9" rx="0.8" fill="#464c54"/><path d="M0.2 2.8 H3.1 V7 H4.3 V8.2 H0 V7 H1.1 V4 H0.2Z" fill="#464c54"/></svg>
<svg style="left:76px;top:485.8px" width="5" height="9" viewBox="0 0 5 9"><rect x="1" y="0" width="2.1" height="1.9" rx="0.8" fill="#464c54"/><path d="M0.2 2.8 H3.1 V7 H4.3 V8.2 H0 V7 H1.1 V4 H0.2Z" fill="#464c54"/></svg>
<svg style="left:536px;top:485.8px" width="5" height="9" viewBox="0 0 5 9"><rect x="1" y="0" width="2.1" height="1.9" rx="0.8" fill="#464c54"/><path d="M0.2 2.8 H3.1 V7 H4.3 V8.2 H0 V7 H1.1 V4 H0.2Z" fill="#464c54"/></svg>
<svg style="left:1455px;top:485.8px" width="5" height="9" viewBox="0 0 5 9"><rect x="1" y="0" width="2.1" height="1.9" rx="0.8" fill="#464c54"/><path d="M0.2 2.8 H3.1 V7 H4.3 V8.2 H0 V7 H1.1 V4 H0.2Z" fill="#464c54"/></svg>
<div class="abs" style="left:0;top:822px;width:1912px;height:44px;background:linear-gradient(to bottom,rgba(0,0,0,0) 0,rgba(0,0,0,0.03) 55%,rgba(0,0,0,0.10) 100%);-webkit-mask-image:linear-gradient(to right,transparent 0,#000 130px,#000 1760px,transparent 1890px);mask-image:linear-gradient(to right,transparent 0,#000 130px,#000 1760px,transparent 1890px)"></div>
<svg style="left:0;top:858px" width="8" height="8" viewBox="0 0 8 8"><path d="M0 4.5 Q1 7.5 6 8 L0 8Z" fill="#000"/></svg>
<svg style="left:1904px;top:858px" width="8" height="8" viewBox="0 0 8 8"><path d="M8 4.5 Q7 7.5 2 8 L8 8Z" fill="#000"/></svg>
</div></body></html>
